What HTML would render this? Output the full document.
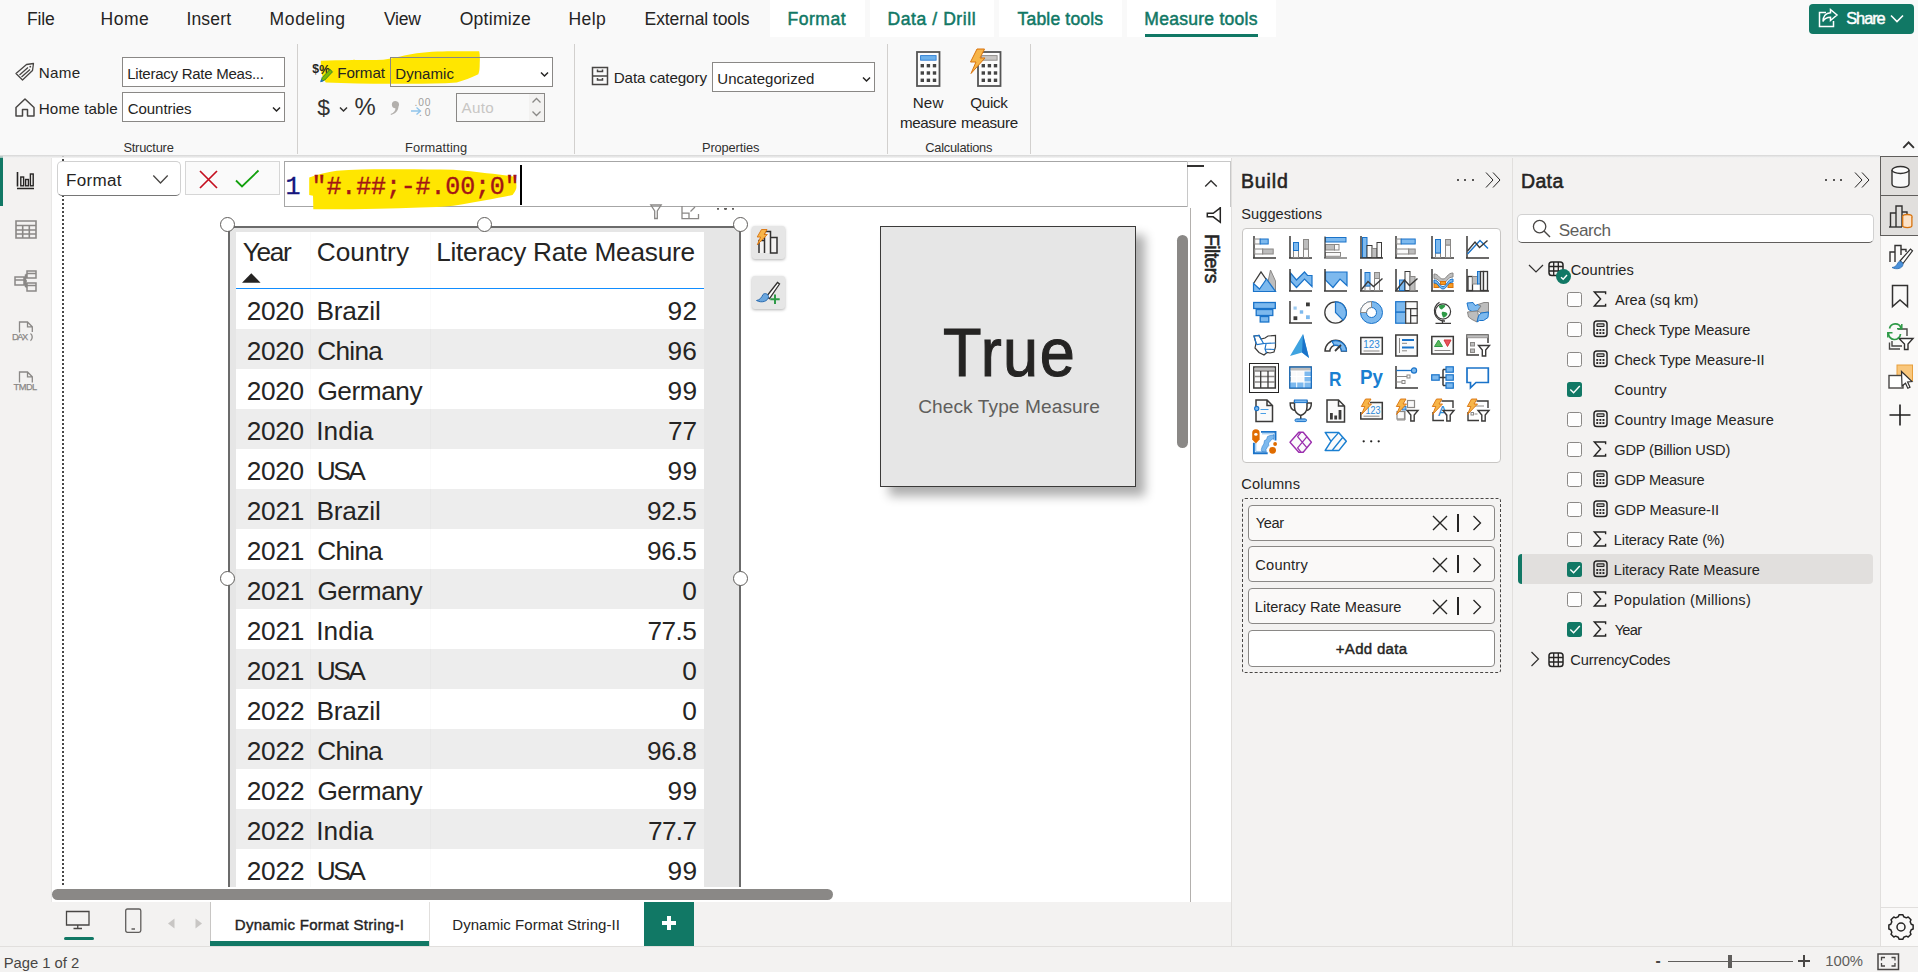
<!DOCTYPE html>
<html lang="en"><head><meta charset="utf-8"><title>Power BI Desktop - Dynamic Format String</title>
<style>
html,body{margin:0;padding:0;}
body{width:1918px;height:972px;overflow:hidden;position:relative;background:#fff;font-family:"Liberation Sans",sans-serif;color:#252423;}
.a{position:absolute;display:block;}
.t{position:absolute;white-space:nowrap;line-height:1;}
svg{overflow:visible;}
</style></head><body>
<div class="a" style="left:51.00px;top:158.00px;width:1180.00px;height:744.00px;background:#ffffff;"></div>
<div class="a" style="left:0.00px;top:158.00px;width:50.50px;height:788.00px;background:#f3f2f1;"></div>
<div class="a" style="left:50.50px;top:158.00px;width:1.00px;height:744.00px;background:#e8e7e6;"></div>
<div class="a" style="left:0.00px;top:156.00px;width:3.00px;height:49.50px;background:#117865;"></div>
<svg class="a" style="left:16.00px;top:171.00px;" width="19" height="19" viewBox="0 0 19 19"><path d="M1.5 1 V15.5 M1 17.5 H18" stroke="#252423" stroke-width="1.6" fill="none"/><rect x="4.8" y="6" width="2.8" height="8.8" fill="none" stroke="#252423" stroke-width="1.4"/><rect x="9.6" y="8.5" width="2.8" height="6.3" fill="none" stroke="#252423" stroke-width="1.4"/><rect x="14.4" y="3" width="2.8" height="11.8" fill="none" stroke="#252423" stroke-width="1.4"/></svg>
<svg class="a" style="left:14.50px;top:220.00px;" width="22" height="19" viewBox="0 0 22 19"><path d="M1 1 H21 V18 H1 Z M1 5.5 H21 M1 10 H21 M1 14 H21 M7.7 5.5 V18 M14.3 5.5 V18" stroke="#8a8886" stroke-width="1.6" fill="none"/></svg>
<svg class="a" style="left:13.50px;top:269.50px;" width="24" height="22" viewBox="0 0 24 22"><path d="M1 7 H10 V15 H1 Z M1 10 H10 M13 1 H22 V8 H13 Z M13 3.6 H22 M13 13 H22 V21 H13 Z M13 15.6 H22 M10 11 H13 M11.5 4.5 V17 M11.5 4.5 H13 M11.5 17 H13" stroke="#8a8886" stroke-width="1.5" fill="none"/></svg>
<svg class="a" style="left:0.00px;top:0.00px;" width="50" height="400" viewBox="0 0 50 400"><path d="M19.5 332.5 V322 H27.5 L32.3 326.800000 V332 M27.5 322 V326.8 H32.3 M30.5 333.5 C32.8 335 32.8 339 30.5 340.8" stroke="#8a8886" stroke-width="1.3" fill="none"/></svg>
<div class="t" style="left:12.04px;top:333.00px;font-size:9.30px;letter-spacing:-1.482px;color:#8a8886;-webkit-text-stroke:0.25px #8a8886;">DAX</div>
<svg class="a" style="left:0.00px;top:0.00px;" width="50" height="400" viewBox="0 0 50 400"><path d="M19.5 382.5 V372 H27.5 L32.3 376.800000 V382.5 M27.5 372 V376.8 H32.3" stroke="#8a8886" stroke-width="1.3" fill="none"/></svg>
<div class="t" style="left:13.59px;top:383.00px;font-size:9.30px;letter-spacing:-0.533px;color:#8a8886;-webkit-text-stroke:0.25px #8a8886;">TMDL</div>
<div class="a" style="left:62.00px;top:155.00px;width:2.00px;height:731.00px;background:repeating-linear-gradient(#484848 0,#484848 2px,transparent 2px,transparent 4px);"></div>
<div class="a" style="left:56.50px;top:161.20px;width:124.00px;height:34.50px;background:#fff;border:1px solid #d1d1d1;border-bottom:1.5px solid #767676;border-radius:5px;box-sizing:border-box;"></div>
<div class="t" style="left:66.10px;top:172.00px;font-size:17.06px;letter-spacing:0.297px;color:#252423;">Format</div>
<svg class="a" style="left:152.00px;top:174.00px;" width="17" height="11" viewBox="0 0 17 11"><path d="M1.3 1.5 L8.5 9 L15.7 1.5" fill="none" stroke="#484644" stroke-width="1.3"/></svg>
<div class="a" style="left:185.00px;top:161.20px;width:94.50px;height:34.30px;background:#fafafa;border:1px solid #d6d6d6;box-sizing:border-box;"></div>
<svg class="a" style="left:199.00px;top:169.50px;" width="19" height="19" viewBox="0 0 19 19"><path d="M1 1 L18 18 M18 1 L1 18" stroke="#c50f1f" stroke-width="1.7" fill="none"/></svg>
<svg class="a" style="left:235.00px;top:169.00px;" width="25" height="19" viewBox="0 0 25 19"><path d="M1 11.5 L7 17.5 L23.5 1.5" stroke="#13a10e" stroke-width="1.8" fill="none"/></svg>
<div class="a" style="left:283.50px;top:161.20px;width:947.00px;height:46.30px;background:#fff;border:1px solid #a6a6a6;box-sizing:border-box;"></div>
<div class="a" style="left:1186.50px;top:161.20px;width:44.00px;height:46.30px;background:#fff;border:1px solid #c8c8c8;box-sizing:border-box;"></div>
<div class="a" style="left:1186.50px;top:165.00px;width:17.00px;height:1.80px;background:#323130;"></div>
<svg class="a" style="left:1204.00px;top:178.50px;" width="14" height="9" viewBox="0 0 14 9"><path d="M1.2 7.5 L7 1.7 L12.8 7.5" fill="none" stroke="#323130" stroke-width="1.4"/></svg>
<svg class="a" style="left:0.00px;top:0.00px;" width="600" height="220" viewBox="0 0 600 220"><path d="M309.2 177.5 C318 174.5 327 172 336.7 170.8 C352 169.5 370 169.200000 386.7 169.2 C408 169 432 169.3 453.3 169.7 C465 170.5 476 171.8 486.7 173.3 C497 174.3 506 175.300000 515 176.7 C516.300000 180.5 516.6 184.5 516.3 188.3 C515.5 191 514 193.300000 512.5 195 C504 197 495 198.500000 486.700000 200 C475 202 464 204.2 453.300000 205.8 C442 207 431 207.3 420 207.5 C406 208.2 392 208.600000 378.3 208.7 C356 209.2 334 209.300000 313.3 209.2 C313.200000 204.5 313.2 200 313 195.8 L309.2 195 Z" fill="#ffe600"/></svg>
<div class="t" style="left:285.49px;top:175.00px;font-size:25.00px;color:#15157d;font-family:'Liberation Mono',monospace;-webkit-text-stroke:0.35px #15157d;">1</div>
<div class="t" style="left:311.62px;top:175.00px;font-size:25.00px;letter-spacing:-0.149px;color:#a31515;font-family:'Liberation Mono',monospace;-webkit-text-stroke:0.35px #a31515;">&quot;#.##;-#.00;0&quot;</div>
<div class="a" style="left:520.00px;top:165.00px;width:2.00px;height:40.00px;background:#000;"></div>
<svg class="a" style="left:650.00px;top:207.50px;" width="12" height="12" viewBox="0 0 12 12"><path d="M0.8 -3 H11.2 L7.3 3 V10.5 H4.7 V3 Z" fill="none" stroke="#8a8886" stroke-width="1.3"/></svg>
<svg class="a" style="left:681.00px;top:207.50px;" width="19" height="12" viewBox="0 0 19 12"><path d="M1 -2 V10.7 H17.5 V6 M1 5.2 H8 V10.7 M9.5 3.5 L14 -1" fill="none" stroke="#8a8886" stroke-width="1.3"/></svg>
<div class="a" style="left:716.50px;top:207.50px;width:2.60px;height:2.30px;background:#605e5c;border-radius:0 0 1.3px 1.3px;"></div>
<div class="a" style="left:724.20px;top:207.50px;width:2.60px;height:2.30px;background:#605e5c;border-radius:0 0 1.3px 1.3px;"></div>
<div class="a" style="left:731.90px;top:207.50px;width:2.60px;height:2.30px;background:#605e5c;border-radius:0 0 1.3px 1.3px;"></div>
<div class="a" style="left:227.50px;top:225.50px;width:513.50px;height:661.20px;background:#e6e6e6;border:2px solid #6b6b6b;border-bottom:none;box-sizing:border-box;"></div>
<div class="a" style="left:235.50px;top:232.00px;width:468.00px;height:654.70px;background:#fff;"></div>
<div class="t" style="left:246.68px;top:298.00px;font-size:26.23px;letter-spacing:-0.268px;color:#252423;">2020</div>
<div class="t" style="left:316.55px;top:298.00px;font-size:26.23px;letter-spacing:-0.276px;color:#252423;">Brazil</div>
<div class="t" style="left:667.57px;top:298.00px;font-size:26.23px;letter-spacing:0.374px;color:#252423;">92</div>
<div class="a" style="left:235.50px;top:328.50px;width:468.00px;height:40.00px;background:#ededed;"></div>
<div class="t" style="left:246.68px;top:338.00px;font-size:26.23px;letter-spacing:-0.268px;color:#252423;">2020</div>
<div class="t" style="left:317.37px;top:338.00px;font-size:26.23px;letter-spacing:-0.774px;color:#252423;">China</div>
<div class="t" style="left:667.57px;top:338.00px;font-size:26.23px;letter-spacing:0.208px;color:#252423;">96</div>
<div class="t" style="left:246.68px;top:378.00px;font-size:26.23px;letter-spacing:-0.268px;color:#252423;">2020</div>
<div class="t" style="left:317.38px;top:378.00px;font-size:26.23px;letter-spacing:-0.448px;color:#252423;">Germany</div>
<div class="t" style="left:667.57px;top:378.00px;font-size:26.23px;letter-spacing:0.298px;color:#252423;">99</div>
<div class="a" style="left:235.50px;top:408.50px;width:468.00px;height:40.00px;background:#ededed;"></div>
<div class="t" style="left:246.68px;top:418.00px;font-size:26.23px;letter-spacing:-0.268px;color:#252423;">2020</div>
<div class="t" style="left:316.28px;top:418.00px;font-size:26.23px;letter-spacing:0.061px;color:#252423;">India</div>
<div class="t" style="left:667.96px;top:418.00px;font-size:26.23px;letter-spacing:-0.010px;color:#252423;">77</div>
<div class="t" style="left:246.68px;top:458.00px;font-size:26.23px;letter-spacing:-0.268px;color:#252423;">2020</div>
<div class="t" style="left:316.68px;top:458.00px;font-size:26.23px;letter-spacing:-2.478px;color:#252423;">USA</div>
<div class="t" style="left:667.57px;top:458.00px;font-size:26.23px;letter-spacing:0.298px;color:#252423;">99</div>
<div class="a" style="left:235.50px;top:488.50px;width:468.00px;height:40.00px;background:#ededed;"></div>
<div class="t" style="left:246.68px;top:498.00px;font-size:26.23px;letter-spacing:-0.183px;color:#252423;">2021</div>
<div class="t" style="left:316.55px;top:498.00px;font-size:26.23px;letter-spacing:-0.276px;color:#252423;">Brazil</div>
<div class="t" style="left:647.07px;top:498.00px;font-size:26.23px;letter-spacing:-0.406px;color:#252423;">92.5</div>
<div class="t" style="left:246.68px;top:538.00px;font-size:26.23px;letter-spacing:-0.183px;color:#252423;">2021</div>
<div class="t" style="left:317.37px;top:538.00px;font-size:26.23px;letter-spacing:-0.774px;color:#252423;">China</div>
<div class="t" style="left:647.07px;top:538.00px;font-size:26.23px;letter-spacing:-0.406px;color:#252423;">96.5</div>
<div class="a" style="left:235.50px;top:568.50px;width:468.00px;height:40.00px;background:#ededed;"></div>
<div class="t" style="left:246.68px;top:578.00px;font-size:26.23px;letter-spacing:-0.183px;color:#252423;">2021</div>
<div class="t" style="left:317.38px;top:578.00px;font-size:26.23px;letter-spacing:-0.448px;color:#252423;">Germany</div>
<div class="t" style="left:682.24px;top:578.00px;font-size:26.23px;color:#252423;">0</div>
<div class="t" style="left:246.68px;top:618.00px;font-size:26.23px;letter-spacing:-0.183px;color:#252423;">2021</div>
<div class="t" style="left:316.28px;top:618.00px;font-size:26.23px;letter-spacing:0.061px;color:#252423;">India</div>
<div class="t" style="left:647.46px;top:618.00px;font-size:26.23px;letter-spacing:-0.534px;color:#252423;">77.5</div>
<div class="a" style="left:235.50px;top:648.50px;width:468.00px;height:40.00px;background:#ededed;"></div>
<div class="t" style="left:246.68px;top:658.00px;font-size:26.23px;letter-spacing:-0.183px;color:#252423;">2021</div>
<div class="t" style="left:316.68px;top:658.00px;font-size:26.23px;letter-spacing:-2.478px;color:#252423;">USA</div>
<div class="t" style="left:682.24px;top:658.00px;font-size:26.23px;color:#252423;">0</div>
<div class="t" style="left:246.68px;top:698.00px;font-size:26.23px;letter-spacing:-0.170px;color:#252423;">2022</div>
<div class="t" style="left:316.55px;top:698.00px;font-size:26.23px;letter-spacing:-0.276px;color:#252423;">Brazil</div>
<div class="t" style="left:682.24px;top:698.00px;font-size:26.23px;color:#252423;">0</div>
<div class="a" style="left:235.50px;top:728.50px;width:468.00px;height:40.00px;background:#ededed;"></div>
<div class="t" style="left:246.68px;top:738.00px;font-size:26.23px;letter-spacing:-0.170px;color:#252423;">2022</div>
<div class="t" style="left:317.37px;top:738.00px;font-size:26.23px;letter-spacing:-0.774px;color:#252423;">China</div>
<div class="t" style="left:647.07px;top:738.00px;font-size:26.23px;letter-spacing:-0.393px;color:#252423;">96.8</div>
<div class="t" style="left:246.68px;top:778.00px;font-size:26.23px;letter-spacing:-0.170px;color:#252423;">2022</div>
<div class="t" style="left:317.38px;top:778.00px;font-size:26.23px;letter-spacing:-0.448px;color:#252423;">Germany</div>
<div class="t" style="left:667.57px;top:778.00px;font-size:26.23px;letter-spacing:0.298px;color:#252423;">99</div>
<div class="a" style="left:235.50px;top:808.50px;width:468.00px;height:40.00px;background:#ededed;"></div>
<div class="t" style="left:246.68px;top:818.00px;font-size:26.23px;letter-spacing:-0.170px;color:#252423;">2022</div>
<div class="t" style="left:316.28px;top:818.00px;font-size:26.23px;letter-spacing:0.061px;color:#252423;">India</div>
<div class="t" style="left:647.96px;top:818.00px;font-size:26.23px;letter-spacing:-0.628px;color:#252423;">77.7</div>
<div class="t" style="left:246.68px;top:858.00px;font-size:26.23px;letter-spacing:-0.170px;color:#252423;">2022</div>
<div class="t" style="left:316.68px;top:858.00px;font-size:26.23px;letter-spacing:-2.478px;color:#252423;">USA</div>
<div class="t" style="left:667.57px;top:858.00px;font-size:26.23px;letter-spacing:0.298px;color:#252423;">99</div>
<div class="a" style="left:310.00px;top:232.00px;width:1.00px;height:654.70px;background:rgba(0,0,0,0.02);"></div>
<div class="a" style="left:430.00px;top:232.00px;width:1.00px;height:654.70px;background:rgba(0,0,0,0.02);"></div>
<div class="t" style="left:242.72px;top:239.00px;font-size:26.23px;letter-spacing:-1.328px;color:#252423;">Year</div>
<div class="t" style="left:316.67px;top:239.00px;font-size:26.23px;letter-spacing:0.091px;color:#252423;">Country</div>
<div class="t" style="left:436.15px;top:239.00px;font-size:26.23px;letter-spacing:-0.242px;color:#252423;">Literacy Rate Measure</div>
<svg class="a" style="left:242.00px;top:273.00px;" width="19" height="10" viewBox="0 0 19 10"><path d="M0 9.7 L9.3 0.3 L18.6 9.7 Z" fill="#252423"/></svg>
<div class="a" style="left:235.50px;top:287.70px;width:468.00px;height:1.40px;background:#118dff;"></div>
<div class="a" style="left:219.70px;top:217.10px;width:15.00px;height:15.00px;background:#fff;border:1.3px solid #605e5c;border-radius:50%;box-sizing:border-box;"></div>
<div class="a" style="left:476.50px;top:217.10px;width:15.00px;height:15.00px;background:#fff;border:1.3px solid #605e5c;border-radius:50%;box-sizing:border-box;"></div>
<div class="a" style="left:733.30px;top:217.10px;width:15.00px;height:15.00px;background:#fff;border:1.3px solid #605e5c;border-radius:50%;box-sizing:border-box;"></div>
<div class="a" style="left:219.70px;top:570.80px;width:15.00px;height:15.00px;background:#fff;border:1.3px solid #605e5c;border-radius:50%;box-sizing:border-box;"></div>
<div class="a" style="left:733.30px;top:570.80px;width:15.00px;height:15.00px;background:#fff;border:1.3px solid #605e5c;border-radius:50%;box-sizing:border-box;"></div>
<div class="a" style="left:751.50px;top:225.50px;width:33.50px;height:33.50px;background:#e6e6e6;border-radius:3px;box-shadow:0 1px 3px rgba(0,0,0,0.3);"></div>
<div class="a" style="left:751.50px;top:275.50px;width:33.50px;height:33.50px;background:#e6e6e6;border-radius:3px;box-shadow:0 1px 3px rgba(0,0,0,0.3);"></div>
<svg class="a" style="left:755.00px;top:229.00px;" width="26" height="26" viewBox="0 0 26 26"><path d="M4 24 V11.5 H9.5 V24 M9.5 24 V2.5 H15.5 V24 M15.5 24 V8.5 H22 V24 Z" fill="#f3f2f1" stroke="#323130" stroke-width="1.5"/><path d="M6.5 0.5 H12 L9.2 5.5 H12.3 L2.3 15.8 L5.6 8 H2.2 Z" fill="#f7b548" stroke="#d9730d" stroke-width="0.9"/></svg>
<svg class="a" style="left:755.00px;top:279.00px;" width="27" height="27" viewBox="0 0 27 27"><path d="M11.5 17.5 L22.5 3.5 L24.5 5 L14.5 19.5 Z" fill="#fff" stroke="#323130" stroke-width="1.3"/><path d="M1.5 21.5 C5 21 6.5 18.5 8 15.5 C10 13.5 13 15 13.5 17.5 C13.5 22 7 24.5 1.5 21.5 Z" fill="#6aa6de" stroke="#2b6cb0" stroke-width="1"/><path d="M20 15.5 V25 M15.3 20.2 H24.7" stroke="#2e9a47" stroke-width="2"/></svg>
<div class="a" style="left:880.00px;top:225.50px;width:256.00px;height:261.50px;background:#e6e6e6;border:1px solid #3b3a39;box-sizing:border-box;box-shadow:9px 9px 10px rgba(0,0,0,0.32);"></div>
<div class="t" style="left:942.85px;top:318px;font-size:68px;letter-spacing:1.60px;color:#252423;-webkit-text-stroke:1.1px #252423;transform-origin:0 0;transform:scaleX(0.9267);">True</div>
<div class="t" style="left:918.13px;top:397.00px;font-size:19.11px;letter-spacing:0.088px;color:#605e5c;">Check Type Measure</div>
<div class="a" style="left:1177.00px;top:234.50px;width:11.00px;height:213.00px;background:#8a8886;border-radius:5.5px;"></div>
<div class="a" style="left:51.50px;top:889.00px;width:781.00px;height:11.00px;background:#8a8886;border-radius:5.5px;"></div>
<div class="a" style="left:1190.00px;top:207.50px;width:1.00px;height:694.00px;background:#b3b0ad;"></div>
<svg class="a" style="left:1200.00px;top:200.00px;" width="26" height="26" viewBox="0 0 26 26"><path d="M20.3 6 V22.300000 L13.2 16.8 H7.300000 V13.300000 H13.2 L20.300000 7.8" fill="none" stroke="#252423" stroke-width="1.5"/></svg>
<div class="a" style="left:1188.00px;top:200.00px;width:42.00px;height:6.50px;background:#fff;"></div>
<div class="t" style="left:1220.6px;top:234px;font-size:19.5px;-webkit-text-stroke:0.55px #252423;color:#252423;transform-origin:0 0;transform:rotate(90deg);letter-spacing:-0.6px;">Filters</div>
<div class="a" style="left:0.00px;top:901.50px;width:1231.50px;height:45.00px;background:#f3f2f1;"></div>
<svg class="a" style="left:65.00px;top:910.00px;" width="27" height="20" viewBox="0 0 27 20"><path d="M1.5 1.5 H24 V15 H1.5 Z M12.75 15 V18.3 M8.5 18.5 H17" fill="none" stroke="#484644" stroke-width="1.3"/></svg>
<div class="a" style="left:64.00px;top:936.50px;width:29.50px;height:3.50px;background:#117865;border-radius:2px;"></div>
<svg class="a" style="left:124.00px;top:908.00px;" width="19" height="26" viewBox="0 0 19 26"><path d="M3.5 1 H15 Q16.8 1 16.8 2.8 V22.5 Q16.8 24.3 15 24.3 H3.5 Q1.7 24.3 1.7 22.5 V2.8 Q1.7 1 3.5 1 Z M7.5 21 H11" fill="none" stroke="#605e5c" stroke-width="1.3"/></svg>
<svg class="a" style="left:167.00px;top:918.00px;" width="9" height="11" viewBox="0 0 9 11"><path d="M7.5 0.5 V10.5 L1 5.5 Z" fill="#c8c6c4"/></svg>
<svg class="a" style="left:194.00px;top:918.00px;" width="9" height="11" viewBox="0 0 9 11"><path d="M1.5 0.5 V10.5 L8 5.5 Z" fill="#c8c6c4"/></svg>
<div class="a" style="left:210.00px;top:901.50px;width:218.50px;height:44.50px;background:#fff;border-left:1px solid #c8c6c4;box-sizing:border-box;"></div>
<div class="a" style="left:210.00px;top:941.00px;width:218.50px;height:5.00px;background:#117865;"></div>
<div class="t" style="left:234.77px;top:917.00px;font-size:15.02px;letter-spacing:0.292px;color:#252423;-webkit-text-stroke:0.42px #252423;">Dynamic Format String-I</div>
<div class="a" style="left:428.50px;top:901.50px;width:215.50px;height:44.50px;background:#fff;border-left:1px solid #e1dfdd;box-sizing:border-box;"></div>
<div class="t" style="left:452.27px;top:917.00px;font-size:15.02px;letter-spacing:0.032px;color:#252423;">Dynamic Format String-II</div>
<div class="a" style="left:644.00px;top:901.50px;width:49.50px;height:44.50px;background:#117865;"></div>
<div class="a" style="left:662.00px;top:921.30px;width:14.00px;height:3.40px;background:#fff;"></div>
<div class="a" style="left:667.30px;top:916.00px;width:3.40px;height:14.00px;background:#fff;"></div>
<div class="a" style="left:0.00px;top:946.00px;width:1918.00px;height:26.00px;background:#f3f2f1;border-top:1px solid #e1dfdd;box-sizing:border-box;"></div>
<div class="t" style="left:3.78px;top:956.00px;font-size:14.82px;letter-spacing:-0.035px;color:#484644;">Page 1 of 2</div>
<div class="t" style="left:1655.39px;top:953.00px;font-size:15.60px;color:#484644;font-weight:700;">-</div>
<div class="a" style="left:1667.50px;top:960.60px;width:125.00px;height:1.00px;background:#605e5c;"></div>
<div class="a" style="left:1727.80px;top:954.50px;width:4.40px;height:13.50px;background:#605e5c;"></div>
<div class="a" style="left:1798.00px;top:960.20px;width:12.00px;height:1.80px;background:#484644;"></div>
<div class="a" style="left:1803.10px;top:955.00px;width:1.80px;height:12.00px;background:#484644;"></div>
<div class="t" style="left:1825.37px;top:954.00px;font-size:14.82px;letter-spacing:-0.082px;color:#605e5c;">100%</div>
<svg class="a" style="left:1877.00px;top:953.00px;" width="23" height="18" viewBox="0 0 23 18"><path d="M1 1 H21.5 V16.5 H1 Z" fill="none" stroke="#484644" stroke-width="1.5"/><path d="M4.5 7.5 V4.5 H8 M14.5 4.5 H18 V7.5 M18 10 V13 H14.5 M8 13 H4.5 V10" fill="none" stroke="#484644" stroke-width="1.3"/></svg>
<div class="a" style="left:1231.50px;top:158.00px;width:280.00px;height:788.00px;background:#f3f2f1;"></div>
<div class="a" style="left:1231.00px;top:158.00px;width:1.00px;height:788.00px;background:#e1dfdd;"></div>
<div class="a" style="left:1511.50px;top:158.00px;width:1.00px;height:788.00px;background:#e1dfdd;"></div>
<div class="a" style="left:1512.50px;top:158.00px;width:367.50px;height:788.00px;background:#f3f2f1;"></div>
<div class="a" style="left:1880.00px;top:158.00px;width:38.00px;height:788.00px;background:#faf9f8;border-left:1px solid #e1dfdd;box-sizing:border-box;"></div>
<div class="t" style="left:1240.90px;top:172.00px;font-size:19.50px;letter-spacing:0.873px;color:#252423;-webkit-text-stroke:0.55px #252423;">Build</div>
<div class="a" style="left:1456.50px;top:179.00px;width:2.20px;height:2.20px;background:#252423;border-radius:50%;"></div>
<div class="a" style="left:1464.10px;top:179.00px;width:2.20px;height:2.20px;background:#252423;border-radius:50%;"></div>
<div class="a" style="left:1471.70px;top:179.00px;width:2.20px;height:2.20px;background:#252423;border-radius:50%;"></div>
<svg class="a" style="left:1484.50px;top:172.00px;" width="16" height="16" viewBox="0 0 16 16"><path d="M1 0.5 L8 8 L1 15.5 M8 0.5 L15 8 L8 15.5" fill="none" stroke="#252423" stroke-width="1"/></svg>
<div class="t" style="left:1241.34px;top:207.00px;font-size:14.62px;letter-spacing:0.020px;color:#252423;">Suggestions</div>
<div class="a" style="left:1242.00px;top:228.00px;width:258.50px;height:234.50px;background:#fff;border:1px solid #c8c6c4;border-radius:4px;box-sizing:border-box;"></div>
<svg class="a" style="left:1253.00px;top:236.00px;" width="23" height="23" viewBox="0 0 23 23"><path d="M1 0 V22 M0 22 H23" stroke="#3b3a39" stroke-width="1.5" fill="none"/><rect x="1.7" y="3" width="5.5" height="5" fill="#fafafa" stroke="#8a8886" stroke-width="1"/><rect x="7.2" y="3" width="8" height="5" fill="#7db9ee" stroke="#1a73c9" stroke-width="1"/><rect x="1.7" y="13" width="8" height="5" fill="#fafafa" stroke="#8a8886" stroke-width="1"/><rect x="9.7" y="13" width="10.5" height="5" fill="#bdbdbd" stroke="#8a8886" stroke-width="1"/></svg>
<svg class="a" style="left:1288.50px;top:236.00px;" width="23" height="23" viewBox="0 0 23 23"><path d="M1 0 V22 M0 22 H23" stroke="#3b3a39" stroke-width="1.5" fill="none"/><rect x="4.5" y="14.5" width="5" height="7" fill="#fafafa" stroke="#8a8886" stroke-width="1"/><rect x="4.5" y="6.5" width="5" height="8" fill="#7db9ee" stroke="#1a73c9" stroke-width="1"/><rect x="14.5" y="13" width="5" height="8.5" fill="#fafafa" stroke="#8a8886" stroke-width="1"/><rect x="14.5" y="3.5" width="5" height="9.5" fill="#bdbdbd" stroke="#8a8886" stroke-width="1"/></svg>
<svg class="a" style="left:1324.00px;top:236.00px;" width="23" height="23" viewBox="0 0 23 23"><rect x="1.5" y="1.5" width="20.5" height="4.5" fill="#7db9ee" stroke="#1a73c9" stroke-width="1"/><rect x="1.5" y="8.5" width="9" height="5.5" fill="#bdbdbd" stroke="#8a8886" stroke-width="1"/><rect x="10.5" y="8.5" width="4.5" height="5.5" fill="#fafafa" stroke="#8a8886" stroke-width="1"/><rect x="1.5" y="16.5" width="15" height="3.8" fill="#fafafa" stroke="#8a8886" stroke-width="1"/><path d="M1 0.5 V22 M0 22 H23" stroke="#3b3a39" stroke-width="1.2" fill="none"/></svg>
<svg class="a" style="left:1359.50px;top:236.00px;" width="23" height="23" viewBox="0 0 23 23"><rect x="2.5" y="1.5" width="4.5" height="20" fill="#7db9ee" stroke="#1a73c9" stroke-width="1"/><rect x="7" y="9.5" width="5" height="12" fill="#fafafa" stroke="#3b3a39" stroke-width="1"/><rect x="12" y="12.5" width="5" height="9" fill="#bdbdbd" stroke="#8a8886" stroke-width="1"/><rect x="17" y="6.5" width="4.5" height="15" fill="#fafafa" stroke="#3b3a39" stroke-width="1"/><path d="M1 0 V22 M0 22 H23" stroke="#3b3a39" stroke-width="1.5" fill="none"/></svg>
<svg class="a" style="left:1395.00px;top:236.00px;" width="23" height="23" viewBox="0 0 23 23"><path d="M1 0 V22 M0 22 H23" stroke="#3b3a39" stroke-width="1.5" fill="none"/><rect x="1.7" y="3" width="4.5" height="5" fill="#fafafa" stroke="#8a8886" stroke-width="1"/><rect x="6.2" y="3" width="14" height="5" fill="#7db9ee" stroke="#1a73c9" stroke-width="1"/><rect x="1.7" y="13" width="12" height="5" fill="#fafafa" stroke="#8a8886" stroke-width="1"/><rect x="13.7" y="13" width="6.5" height="5" fill="#bdbdbd" stroke="#8a8886" stroke-width="1"/></svg>
<svg class="a" style="left:1430.50px;top:236.00px;" width="23" height="23" viewBox="0 0 23 23"><path d="M1 0 V22 M0 22 H23" stroke="#3b3a39" stroke-width="1.5" fill="none"/><rect x="4.5" y="17" width="5" height="4.5" fill="#fafafa" stroke="#8a8886" stroke-width="1"/><rect x="4.5" y="3.5" width="5" height="13.5" fill="#7db9ee" stroke="#1a73c9" stroke-width="1"/><rect x="14.5" y="9" width="5" height="12.5" fill="#fafafa" stroke="#8a8886" stroke-width="1"/><rect x="14.5" y="3.5" width="5" height="5.5" fill="#bdbdbd" stroke="#8a8886" stroke-width="1"/></svg>
<svg class="a" style="left:1466.00px;top:236.00px;" width="23" height="23" viewBox="0 0 23 23"><path d="M1 0 V22 M0 22 H23" stroke="#3b3a39" stroke-width="1.5" fill="none"/><path d="M1.5 18 L14 4.5 L22 12.5" fill="none" stroke="#1a73c9" stroke-width="1.4"/><path d="M1.5 15 L9 6 L13.5 11.5 L21.5 4.5" fill="none" stroke="#3b3a39" stroke-width="1.4"/></svg>
<svg class="a" style="left:1253.00px;top:268.55px;" width="23" height="23" viewBox="0 0 23 23"><path d="M13 22 L17.5 1 L22.5 12 V22 Z" fill="#bdbdbd" stroke="#8a8886" stroke-width="1"/><path d="M0.5 14.5 L8 3 L15 13" fill="#fafafa" stroke="#3b3a39" stroke-width="1.3"/><path d="M0.5 14.5 L6.5 20 L13.5 10 L22.5 22.5 H0.5 Z" fill="#7db9ee" stroke="#1a73c9" stroke-width="1.2"/></svg>
<svg class="a" style="left:1288.50px;top:268.55px;" width="23" height="23" viewBox="0 0 23 23"><path d="M1.5 4 L7.5 11 L15.5 3 L18.5 6.5 H23 V17.5 L15.5 10 L7.5 18.5 L1.5 12 Z" fill="#7db9ee" stroke="#1a73c9" stroke-width="1.2"/><path d="M1 0 V22 M0 22 H23" stroke="#3b3a39" stroke-width="1.5" fill="none"/></svg>
<svg class="a" style="left:1324.00px;top:268.55px;" width="23" height="23" viewBox="0 0 23 23"><path d="M1.5 3 H23 V16.5 L16 10 L9 18.5 L1.5 11 Z" fill="#7db9ee" stroke="#1a73c9" stroke-width="1.2"/><path d="M1 0 V22 M0 22 H23" stroke="#3b3a39" stroke-width="1.5" fill="none"/></svg>
<svg class="a" style="left:1359.50px;top:268.55px;" width="23" height="23" viewBox="0 0 23 23"><path d="M1 0 V22 M0 22 H23" stroke="#3b3a39" stroke-width="1.5" fill="none"/><rect x="5" y="17" width="5" height="4.5" fill="#fafafa" stroke="#8a8886" stroke-width="1"/><rect x="5" y="3.5" width="5" height="13.5" fill="#7db9ee" stroke="#1a73c9" stroke-width="1"/><rect x="14.5" y="9.5" width="5" height="12" fill="#fafafa" stroke="#8a8886" stroke-width="1"/><rect x="14.5" y="3.5" width="5" height="6" fill="#bdbdbd" stroke="#8a8886" stroke-width="1"/><path d="M1.5 20.5 L8 12.5 L13.5 17.5 L22.5 9.5" fill="none" stroke="#3b3a39" stroke-width="1.4"/></svg>
<svg class="a" style="left:1395.00px;top:268.55px;" width="23" height="23" viewBox="0 0 23 23"><path d="M1 0 V22 M0 22 H23" stroke="#3b3a39" stroke-width="1.5" fill="none"/><rect x="4.5" y="11" width="5" height="10.5" fill="#7db9ee" stroke="#1a73c9" stroke-width="1"/><rect x="10" y="2.5" width="5" height="19" fill="#fafafa" stroke="#3b3a39" stroke-width="1"/><rect x="15" y="7.5" width="5" height="14" fill="#bdbdbd" stroke="#8a8886" stroke-width="1"/><path d="M1.5 21 L9.5 11 L14.5 16.5 L22.5 9.5" fill="none" stroke="#3b3a39" stroke-width="1.4"/></svg>
<svg class="a" style="left:1430.50px;top:268.55px;" width="23" height="23" viewBox="0 0 23 23"><path d="M3 5 C8 5 8 10 12 10 C16 10 16 4 22 4 V8 C16 8 16 14 12 14 C8 14 8 9.5 3 9.5 Z" fill="#bdbdbd" stroke="#8a8886" stroke-width="1"/><rect x="3" y="14.5" width="5" height="4" fill="#f59b23" stroke="#d9730d" stroke-width="1"/><rect x="17" y="14.5" width="5" height="4" fill="#f59b23" stroke="#d9730d" stroke-width="1"/><rect x="9.5" y="12.5" width="5" height="3" fill="#f59b23" stroke="#d9730d" stroke-width="1"/><path d="M3 11 C8 11 8 17.5 12 17.5 C16 17.5 16 10 22 10 V13 C16 13 16 20 12 20 C8 20 8 14 3 14 Z" fill="#7db9ee" stroke="#1a73c9" stroke-width="1"/><path d="M1 0 V22 M0 22 H23" stroke="#3b3a39" stroke-width="1.5" fill="none"/></svg>
<svg class="a" style="left:1466.00px;top:268.55px;" width="23" height="23" viewBox="0 0 23 23"><rect x="2" y="7.5" width="4.5" height="14" fill="#fafafa" stroke="#3b3a39" stroke-width="1.3"/><rect x="6.5" y="7.5" width="5" height="7.5" fill="#bdbdbd" stroke="#8a8886" stroke-width="1"/><rect x="11.5" y="2.5" width="3" height="12.5" fill="#7db9ee" stroke="#1a73c9" stroke-width="1"/><rect x="14.5" y="2.5" width="3" height="19" fill="#fafafa" stroke="#3b3a39" stroke-width="1.3"/><rect x="17.5" y="2.5" width="4" height="19" fill="#fafafa" stroke="#3b3a39" stroke-width="1.3"/><path d="M1 0 V22 M0 22 H23" stroke="#3b3a39" stroke-width="1.5" fill="none"/></svg>
<svg class="a" style="left:1253.00px;top:301.10px;" width="23" height="23" viewBox="0 0 23 23"><rect x="0.7" y="1.5" width="21.6" height="6" fill="#7db9ee" stroke="#1a73c9" stroke-width="1.3"/><rect x="3.2" y="8.5" width="16.6" height="6" fill="#7db9ee" stroke="#1a73c9" stroke-width="1.3"/><rect x="7.2" y="15.5" width="8.6" height="5.5" fill="#7db9ee" stroke="#1a73c9" stroke-width="1.3"/></svg>
<svg class="a" style="left:1288.50px;top:301.10px;" width="23" height="23" viewBox="0 0 23 23"><path d="M1 0 V22 M0 22 H23" stroke="#3b3a39" stroke-width="1.5" fill="none"/><rect x="17" y="1.5" width="3.8" height="3.8" fill="#3b3a39" stroke="#3b3a39" stroke-width="0"/><rect x="4.5" y="5.5" width="3.2" height="3.2" fill="#9cc9f0" stroke="#9cc9f0" stroke-width="0"/><rect x="10.8" y="9.3" width="3.4" height="3.4" fill="#7db9ee" stroke="#7db9ee" stroke-width="0"/><rect x="4.5" y="15.3" width="3.8" height="3.8" fill="#3b3a39" stroke="#3b3a39" stroke-width="0"/><rect x="17" y="14.3" width="3.8" height="3.8" fill="#7db9ee" stroke="#7db9ee" stroke-width="0"/></svg>
<svg class="a" style="left:1324.00px;top:301.10px;" width="23" height="23" viewBox="0 0 23 23"><circle cx="11.5" cy="11.5" r="10.7" fill="#fafafa" stroke="#3b3a39" stroke-width="1.3"/><path d="M11.5 0.8 A10.7 10.7 0 0 1 19.1 19.1 L11.5 11.5 Z" fill="#7db9ee" stroke="#1a73c9" stroke-width="1.2"/></svg>
<svg class="a" style="left:1359.50px;top:301.10px;" width="23" height="23" viewBox="0 0 23 23"><circle cx="11.5" cy="11.5" r="8" fill="none" stroke="#7db9ee" stroke-width="6"/><circle cx="11.5" cy="11.5" r="11" fill="none" stroke="#1a73c9" stroke-width="1"/><circle cx="11.5" cy="11.5" r="5" fill="none" stroke="#1a73c9" stroke-width="1"/><path d="M0.5 11.5 A11 11 0 0 1 11.5 0.5 V6.5 A5 5 0 0 0 6.5 11.5 Z" fill="#fafafa" stroke="#8a8886" stroke-width="1"/></svg>
<svg class="a" style="left:1395.00px;top:301.10px;" width="23" height="23" viewBox="0 0 23 23"><rect x="0.7" y="0.7" width="10" height="10.5" fill="#7db9ee" stroke="#1a73c9" stroke-width="1.2"/><rect x="0.7" y="11.2" width="10" height="11" fill="#7db9ee" stroke="#1a73c9" stroke-width="1.2"/><rect x="10.7" y="0.7" width="11.5" height="7" fill="#fafafa" stroke="#3b3a39" stroke-width="1.2"/><rect x="10.7" y="7.7" width="5" height="14.5" fill="#fafafa" stroke="#3b3a39" stroke-width="1.2"/><rect x="15.7" y="7.7" width="6.5" height="7" fill="#fafafa" stroke="#3b3a39" stroke-width="1.2"/><rect x="15.7" y="14.7" width="6.5" height="7.5" fill="#fafafa" stroke="#3b3a39" stroke-width="1.2"/></svg>
<svg class="a" style="left:1430.50px;top:301.10px;" width="23" height="23" viewBox="0 0 23 23"><circle cx="12" cy="10.5" r="7.6" fill="#fff" stroke="#3b3a39" stroke-width="1.2"/><path d="M8 5 C10 3.5 13 3.5 14.5 4.5 C14 6.5 12 7 11 8.5 C9.5 8.5 8 7 8 5 Z M11 11 C13 10.5 16 11.5 16.5 13 C15.5 15.5 13.5 17 12 16.5 C11.5 14.5 10 13 11 11 Z" fill="#2e9a47"/><path d="M8.5 1.3 A10 10 0 0 0 14 20" fill="none" stroke="#3b3a39" stroke-width="1.3"/><path d="M11.5 20 V22 M4.5 22.3 H20" stroke="#3b3a39" stroke-width="1.3"/></svg>
<svg class="a" style="left:1466.00px;top:301.10px;" width="23" height="23" viewBox="0 0 23 23"><path d="M1 2 L7 1.5 L9 4.5 L12 3.5 L15 5 L11.5 10 L6 10.5 L2.5 8.5 Z" fill="#7db9ee" stroke="#1a73c9" stroke-width="1"/><path d="M12 3.5 L18 1.5 L22.5 1.5 V11 L15 12 L11.5 10 L15 5 Z" fill="#bdbdbd" stroke="#8a8886" stroke-width="1"/><path d="M1.5 11 L6 10.5 L11.5 10 L12.5 15 L11 21 L6 18.5 L2.5 16 Z" fill="#bdbdbd" stroke="#8a8886" stroke-width="1"/><path d="M12.5 15 L15 12 L22.5 11 L22 16.5 L17.5 19.5 L13.5 19.5 L11 21 Z" fill="#7db9ee" stroke="#1a73c9" stroke-width="1"/></svg>
<svg class="a" style="left:1253.00px;top:333.65px;" width="23" height="23" viewBox="0 0 23 23"><path d="M1 2 L6 1.5 L8 5 L12 4 L15 2 L22.5 1.5 V13 L21 18 L17 19 L14 18.5 L11 21 L6 18.5 L2 14 L3 9 Z" fill="#fff" stroke="#3b3a39" stroke-width="1.2"/><path d="M1 2 L6 1.5 L8 5 L10.5 9.5 L4 10.5 L3 9 Z M10.5 9.5 L22.5 9 M13 10 L12 15 L13.5 19 M12 15 L21.5 15.5" fill="none" stroke="#1a73c9" stroke-width="1.2"/></svg>
<svg class="a" style="left:1288.50px;top:333.65px;" width="23" height="23" viewBox="0 0 23 23"><path d="M14 0 L20 24 L13 18.5 L1 22 Z" fill="#3fa3e0"/><path d="M14 0 L20 24 L13 18.5 Z" fill="#1a73c9"/></svg>
<svg class="a" style="left:1324.00px;top:333.65px;" width="23" height="23" viewBox="0 0 23 23"><path d="M1 17 A10.7 10.7 0 0 1 22.4 17 H17.5 A5.8 5.8 0 0 0 5.9 17 Z" fill="#fff" stroke="#3b3a39" stroke-width="1.4"/><path d="M8 7.3 A10.7 10.7 0 0 1 22.4 17 H17.5 A5.8 5.8 0 0 0 10.2 11.4 Z" fill="#7db9ee" stroke="#1a73c9" stroke-width="1.2"/><path d="M11 17 L17 11" stroke="#3b3a39" stroke-width="1.8"/></svg>
<svg class="a" style="left:1359.50px;top:333.65px;" width="23" height="23" viewBox="0 0 23 23"><rect x="0.8" y="3.5" width="21.5" height="16.5" fill="#fafafa" stroke="#3b3a39" stroke-width="1.5"/><text x="3.2" y="14.3" font-size="10.5" font-family="'Liberation Sans',sans-serif" fill="#2b88d8" textLength="16.5" lengthAdjust="spacingAndGlyphs">123</text><path d="M3.5 17 H19.5" stroke="#8a8886" stroke-width="1"/></svg>
<svg class="a" style="left:1395.00px;top:333.65px;" width="23" height="23" viewBox="0 0 23 23"><rect x="0.8" y="1" width="21.5" height="21" fill="#fafafa" stroke="#3b3a39" stroke-width="1.5"/><path d="M4.5 4 V19" stroke="#8a8886" stroke-width="1"/><path d="M7 6 H19 M7 13.5 H19" stroke="#1a73c9" stroke-width="1.8"/><path d="M7 9.3 H12 M7 16.8 H12" stroke="#8a8886" stroke-width="1"/></svg>
<svg class="a" style="left:1430.50px;top:333.65px;" width="23" height="23" viewBox="0 0 23 23"><rect x="0.8" y="2.5" width="21.5" height="17.5" fill="#fafafa" stroke="#3b3a39" stroke-width="1.5"/><path d="M3.5 12.5 L7.5 6 L11.5 12.5 Z" fill="#5bb75b" stroke="#2e9a47" stroke-width="1"/><path d="M13 6 H20 L16.5 12.5 Z" fill="#e8515b" stroke="#d13438" stroke-width="1"/><path d="M3.5 16.5 H19.5" stroke="#8a8886" stroke-width="1"/></svg>
<svg class="a" style="left:1466.00px;top:333.65px;" width="23" height="23" viewBox="0 0 23 23"><path d="M22 9 V1 H1 V21 H13" fill="none" stroke="#3b3a39" stroke-width="1.5"/><rect x="1" y="1" width="21" height="2.8" fill="#bdbdbd" stroke="#8a8886" stroke-width="0.8"/><rect x="4.5" y="8.5" width="4" height="3.5" fill="#bdbdbd" stroke="#8a8886" stroke-width="1"/><rect x="4.5" y="15" width="4" height="3.5" fill="#bdbdbd" stroke="#8a8886" stroke-width="1"/><path d="M12.5 11.5 h11 l-3.8 4.5 v6 h-3.4 v-6 Z" fill="#fff" stroke="#3b3a39" stroke-width="1.4"/></svg>
<svg class="a" style="left:1253.00px;top:366.20px;" width="23" height="23" viewBox="0 0 23 23"><rect x="0.8" y="1" width="21.5" height="21" fill="#fafafa" stroke="#3b3a39" stroke-width="1.5"/><rect x="1.5" y="1.7" width="20" height="3.3" fill="#bdbdbd" stroke="#bdbdbd" stroke-width="0"/><path d="M1 5 H22 M1 10.5 H22 M1 16 H22" stroke="#8a8886" stroke-width="1.3"/><path d="M7.7 5 V22 M15 5 V22" stroke="#3b3a39" stroke-width="1.3"/></svg>
<svg class="a" style="left:1288.50px;top:366.20px;" width="23" height="23" viewBox="0 0 23 23"><rect x="0.8" y="1" width="21.5" height="21" fill="#fafafa" stroke="#3b3a39" stroke-width="1.2"/><rect x="1.5" y="1.7" width="20" height="3.3" fill="#bdbdbd" stroke="#bdbdbd" stroke-width="0"/><rect x="15" y="5" width="7" height="17" fill="#7db9ee" stroke="#1a73c9" stroke-width="0"/><rect x="1" y="16" width="21" height="6" fill="#7db9ee" stroke="#1a73c9" stroke-width="0"/><path d="M1 5 H22 M1 10.5 H22 M1 16 H22 M7.7 5 V22 M15 5 V22" stroke="#fff" stroke-width="1"/><rect x="0.8" y="1" width="21.500000" height="21" fill="none" stroke="#1a73c9" stroke-width="1.2"/></svg>
<svg class="a" style="left:1324.00px;top:366.20px;" width="23" height="23" viewBox="0 0 23 23"><text x="5" y="19.5" font-size="20" font-weight="700" font-family="'Liberation Sans',sans-serif" fill="#1a7fd1" textLength="12.5" lengthAdjust="spacingAndGlyphs">R</text></svg>
<svg class="a" style="left:1359.50px;top:366.20px;" width="23" height="23" viewBox="0 0 23 23"><text x="0" y="17.5" font-size="21" font-weight="700" font-family="'Liberation Sans',sans-serif" fill="#1a7fd1" textLength="23" lengthAdjust="spacingAndGlyphs">Py</text></svg>
<svg class="a" style="left:1395.00px;top:366.20px;" width="23" height="23" viewBox="0 0 23 23"><path d="M1 0 V22 M0 22 H23" stroke="#3b3a39" stroke-width="1.5" fill="none"/><path d="M1.5 4.5 H17" stroke="#1a73c9" stroke-width="1.3"/><circle cx="19" cy="4.5" r="2.6" fill="#7db9ee" stroke="#1a73c9" stroke-width="1.2"/><path d="M1.5 10.5 H12 M1.5 16 H7" stroke="#8a8886" stroke-width="1.2"/><rect x="12" y="9" width="3" height="3" fill="#fafafa" stroke="#8a8886" stroke-width="1"/><rect x="7" y="14.5" width="3" height="3" fill="#fafafa" stroke="#8a8886" stroke-width="1"/></svg>
<svg class="a" style="left:1430.50px;top:366.20px;" width="23" height="23" viewBox="0 0 23 23"><path d="M8 11.5 H12 M12 3.5 V19.5 M12 3.5 H15 M12 11.5 H15 M12 19.5 H15" stroke="#3b3a39" stroke-width="1.5" fill="none"/><rect x="0.7" y="8.8" width="7.5" height="5.4" fill="#7db9ee" stroke="#1a73c9" stroke-width="1.2"/><rect x="15" y="0.8" width="7.3" height="5.4" fill="#7db9ee" stroke="#1a73c9" stroke-width="1.2"/><rect x="15" y="8.8" width="7.3" height="5.4" fill="#7db9ee" stroke="#1a73c9" stroke-width="1.2"/><rect x="15" y="16.8" width="7.3" height="5.4" fill="#7db9ee" stroke="#1a73c9" stroke-width="1.2"/></svg>
<svg class="a" style="left:1466.00px;top:366.20px;" width="23" height="23" viewBox="0 0 23 23"><path d="M1 2 H22.3 V16.5 H10 L4.5 21.8 V16.5 H1 Z" fill="#fff" stroke="#1a73c9" stroke-width="1.7" stroke-linejoin="miter"/></svg>
<svg class="a" style="left:1253.00px;top:398.75px;" width="23" height="23" viewBox="0 0 23 23"><path d="M3 1 H14 L19.5 6.5 V22.5 H3 Z M14 1 V6.5 H19.5" fill="#fafafa" stroke="#3b3a39" stroke-width="1.5"/><circle cx="3.7" cy="9.5" r="2.1" fill="#7db9ee" stroke="#1a73c9" stroke-width="1.1"/><path d="M7.5 10.5 H15.5 M7.5 14.5 H13" stroke="#4a9fe6" stroke-width="1.2"/></svg>
<svg class="a" style="left:1288.50px;top:398.75px;" width="23" height="23" viewBox="0 0 23 23"><path d="M5.5 2 H18 V8 C18 13 14.5 15.5 11.75 16.5 C9 15.5 5.5 13 5.5 8 Z M5.5 4 H1.2 C1 8 2.5 11 6.5 11.8 M18 4 H22.3 C22.5 8 21 11 17 11.8 M11.75 16.5 V20 M7.5 20.5 H16" fill="none" stroke="#3b3a39" stroke-width="1.5"/><rect x="5.5" y="1" width="12.5" height="2.6" fill="#7db9ee" stroke="#1a73c9" stroke-width="1"/><rect x="6" y="20" width="11.500000" height="2.6" rx="1.3" fill="#7db9ee" stroke="#1a73c9" stroke-width="1"/></svg>
<svg class="a" style="left:1324.00px;top:398.75px;" width="23" height="23" viewBox="0 0 23 23"><path d="M3 1 H14.5 L20.5 7 V23 H3 Z M14.5 1 V7 H20.5" fill="#fafafa" stroke="#3b3a39" stroke-width="1.5"/><rect x="6" y="14" width="2.8" height="6.5" fill="#3b3a39" stroke="#3b3a39" stroke-width="0"/><rect x="10.3" y="16.5" width="2.8" height="4" fill="#3b3a39" stroke="#3b3a39" stroke-width="0"/><rect x="14.6" y="11" width="2.8" height="9.5" fill="#3b3a39" stroke="#3b3a39" stroke-width="0"/></svg>
<svg class="a" style="left:1359.50px;top:398.75px;" width="23" height="23" viewBox="0 0 23 23"><path d="M10 3.5 H22.3 V20 H0.8 V13" fill="#fafafa" stroke="#3b3a39" stroke-width="1.5"/><text x="5.5" y="14.5" font-size="10.5" font-family="'Liberation Sans',sans-serif" fill="#2b88d8" textLength="15" lengthAdjust="spacingAndGlyphs">123</text><path d="M3.500000 17.2 H19.5" stroke="#8a8886" stroke-width="1"/><path d="M5.5 0 H11 L8 5 H11.5 L1.5 15.5 L4.8 7.5 H1.3 Z" fill="#f7b548" stroke="#d9730d" stroke-width="0.9" stroke-linejoin="miter"/></svg>
<svg class="a" style="left:1395.00px;top:398.75px;" width="23" height="23" viewBox="0 0 23 23"><rect x="12.5" y="1.5" width="7" height="7" fill="#fafafa" stroke="#8a8886" stroke-width="1.2"/><rect x="7" y="7.5" width="4" height="3.5" fill="#7db9ee" stroke="#1a73c9" stroke-width="0.8"/><rect x="2" y="12.5" width="7.5" height="7.5" fill="#fafafa" stroke="#8a8886" stroke-width="1.2"/><path d="M10 12 V21 H2" stroke="#8a8886" stroke-width="1" fill="none"/><path d="M12 11.5 h11 l-3.8 4.5 v6 h-3.4 v-6 Z" fill="#fff" stroke="#3b3a39" stroke-width="1.4"/><path d="M5.5 0 H11 L8 5 H11.5 L1.5 15.5 L4.8 7.5 H1.3 Z" fill="#f7b548" stroke="#d9730d" stroke-width="0.9" stroke-linejoin="miter"/></svg>
<svg class="a" style="left:1430.50px;top:398.75px;" width="23" height="23" viewBox="0 0 23 23"><path d="M10.500000 2 H22 V9 M2 13 V21.5 H13" fill="none" stroke="#3b3a39" stroke-width="1.4"/><text x="7" y="17" font-size="14" font-family="'Liberation Sans',sans-serif" fill="#2b88d8">A</text><path d="M12 11.5 h11 l-3.8 4.5 v6 h-3.4 v-6 Z" fill="#fff" stroke="#3b3a39" stroke-width="1.4"/><path d="M5.5 0 H11 L8 5 H11.5 L1.5 15.5 L4.8 7.5 H1.3 Z" fill="#f7b548" stroke="#d9730d" stroke-width="0.9" stroke-linejoin="miter"/></svg>
<svg class="a" style="left:1466.00px;top:398.75px;" width="23" height="23" viewBox="0 0 23 23"><path d="M10.5 2 H22 V9 M2 13 V21.500000 H13" fill="none" stroke="#3b3a39" stroke-width="1.4"/><path d="M9 7 H18 M8.5 15 H11.5" stroke="#8a8886" stroke-width="1"/><rect x="5" y="13.5" width="2.5" height="2.5" fill="#fafafa" stroke="#8a8886" stroke-width="1"/><path d="M12 11.5 h11 l-3.8 4.5 v6 h-3.4 v-6 Z" fill="#fff" stroke="#3b3a39" stroke-width="1.4"/><path d="M5.5 0 H11 L8 5 H11.5 L1.5 15.5 L4.8 7.5 H1.3 Z" fill="#f7b548" stroke="#d9730d" stroke-width="0.9" stroke-linejoin="miter"/></svg>
<svg class="a" style="left:1253.00px;top:431.30px;" width="23" height="23" viewBox="0 0 23 23"><path d="M8 0.9 H22.5 V9.500000 M0.9 11.7 V22.3 H14.7" fill="none" stroke="#1a73c9" stroke-width="1.9"/><path d="M9 2.8 H20.600000 V9 M2.8 12 V20.400000 H12" fill="none" stroke="#8cc0ee" stroke-width="1"/><path d="M21 4 L17 4.500000 L14.5 5.5 L13.5 8.5 L11.5 9.5 L10.8 13 L9.2 15.5 L8.3 18.5 L8.8 20.5 L13.3 21 L13 18.5 L14.2 16.5 L15.8 14.5 L15.5 12 L17 10.5 L18.5 8.5 L21 7.5 Z" fill="#7db9ee" stroke="#1a73c9" stroke-width="0.5"/><path d="M-0.8 2 A3.700000 3.7 0 0 1 6.6 2 V8.6 L2.9 12.4 L-0.8 8.6 Z" fill="#e06c00"/><ellipse cx="2.9" cy="3.4" rx="1.7" ry="1.3" fill="#fff"/><circle cx="19.6" cy="19.300000" r="3.4" fill="#e06c00"/><circle cx="22.1" cy="13" r="1.9" fill="#e06c00"/></svg>
<svg class="a" style="left:1288.50px;top:431.30px;" width="23" height="23" viewBox="0 0 23 23"><path d="M9.8 1.2 H14.2 L22.4 11.2 L14.2 21.2 H9.8 L1 11.2 Z" fill="#fbfbfb" stroke="#9b2fae" stroke-width="1.4" stroke-linejoin="round"/><path d="M11.8 1.5 L8.6 5.6 L18 16.800000 M11.8 20.9 L8.600000 16.8 L18 5.6" fill="none" stroke="#9b2fae" stroke-width="1.3" stroke-linejoin="round"/></svg>
<svg class="a" style="left:1324.00px;top:431.30px;" width="23" height="23" viewBox="0 0 23 23"><path d="M1.2 1.4 H14.6 L22.3 10.3 L15 19.400000 H1.2 L7 10.3 Z" fill="#fbfbfb" stroke="#1a7fd1" stroke-width="1.5" stroke-linejoin="round"/><path d="M14.6 1.6 L7 10.3 M18.6 6.5 L8.5 19" stroke="#1a7fd1" stroke-width="1.3"/></svg>
<svg class="a" style="left:1359.50px;top:431.30px;" width="23" height="23" viewBox="0 0 23 23"><circle cx="3.7" cy="10.300000" r="1.15" fill="#252423"/><circle cx="11.2" cy="10.3" r="1.15" fill="#252423"/><circle cx="18.7" cy="10.3" r="1.15" fill="#252423"/></svg>
<div class="a" style="left:1249.00px;top:363.20px;width:30.00px;height:30.00px;border:1.3px solid #252423;box-sizing:border-box;"></div>
<div class="t" style="left:1241.26px;top:477.00px;font-size:14.62px;letter-spacing:0.177px;color:#252423;">Columns</div>
<div class="a" style="left:1242.00px;top:498.00px;width:258.50px;height:175.00px;border:1px dashed #484644;border-radius:3px;box-sizing:border-box;"></div>
<div class="a" style="left:1248.00px;top:504.50px;width:246.70px;height:36.00px;background:#faf9f8;border:1px solid #8a8886;border-radius:4px;box-sizing:border-box;"></div>
<div class="t" style="left:1255.68px;top:516.00px;font-size:14.62px;letter-spacing:-0.396px;color:#252423;">Year</div>
<svg class="a" style="left:1432.00px;top:515.00px;" width="16" height="16" viewBox="0 0 16 16"><path d="M1 1 L15 15 M15 1 L1 15" stroke="#252423" stroke-width="1.4" fill="none"/></svg>
<div class="a" style="left:1457.30px;top:513.50px;width:1.50px;height:18.00px;background:#252423;"></div>
<svg class="a" style="left:1472.00px;top:515.00px;" width="10" height="16" viewBox="0 0 10 16"><path d="M1.5 1 L8.5 8 L1.5 15" stroke="#252423" stroke-width="1.3" fill="none"/></svg>
<div class="a" style="left:1248.00px;top:546.30px;width:246.70px;height:36.00px;background:#faf9f8;border:1px solid #8a8886;border-radius:4px;box-sizing:border-box;"></div>
<div class="t" style="left:1255.26px;top:558.00px;font-size:14.62px;letter-spacing:0.227px;color:#252423;">Country</div>
<svg class="a" style="left:1432.00px;top:556.80px;" width="16" height="16" viewBox="0 0 16 16"><path d="M1 1 L15 15 M15 1 L1 15" stroke="#252423" stroke-width="1.4" fill="none"/></svg>
<div class="a" style="left:1457.30px;top:555.30px;width:1.50px;height:18.00px;background:#252423;"></div>
<svg class="a" style="left:1472.00px;top:556.80px;" width="10" height="16" viewBox="0 0 10 16"><path d="M1.5 1 L8.5 8 L1.5 15" stroke="#252423" stroke-width="1.3" fill="none"/></svg>
<div class="a" style="left:1248.00px;top:588.10px;width:246.70px;height:36.00px;background:#faf9f8;border:1px solid #8a8886;border-radius:4px;box-sizing:border-box;"></div>
<div class="t" style="left:1254.80px;top:600.00px;font-size:14.62px;letter-spacing:-0.014px;color:#252423;">Literacy Rate Measure</div>
<svg class="a" style="left:1432.00px;top:598.60px;" width="16" height="16" viewBox="0 0 16 16"><path d="M1 1 L15 15 M15 1 L1 15" stroke="#252423" stroke-width="1.4" fill="none"/></svg>
<div class="a" style="left:1457.30px;top:597.10px;width:1.50px;height:18.00px;background:#252423;"></div>
<svg class="a" style="left:1472.00px;top:598.60px;" width="10" height="16" viewBox="0 0 10 16"><path d="M1.5 1 L8.5 8 L1.5 15" stroke="#252423" stroke-width="1.3" fill="none"/></svg>
<div class="a" style="left:1248.00px;top:630.30px;width:246.70px;height:36.50px;background:#fff;border:1px solid #8a8886;border-radius:4px;box-sizing:border-box;"></div>
<div class="t" style="left:1335.77px;top:641.00px;font-size:15.02px;letter-spacing:0.294px;color:#252423;-webkit-text-stroke:0.42px #252423;">+Add data</div>
<div class="t" style="left:1520.90px;top:172.00px;font-size:19.50px;letter-spacing:0.403px;color:#252423;-webkit-text-stroke:0.55px #252423;">Data</div>
<div class="a" style="left:1825.00px;top:179.00px;width:2.20px;height:2.20px;background:#252423;border-radius:50%;"></div>
<div class="a" style="left:1832.60px;top:179.00px;width:2.20px;height:2.20px;background:#252423;border-radius:50%;"></div>
<div class="a" style="left:1840.20px;top:179.00px;width:2.20px;height:2.20px;background:#252423;border-radius:50%;"></div>
<svg class="a" style="left:1853.50px;top:172.00px;" width="16" height="16" viewBox="0 0 16 16"><path d="M1 0.5 L8 8 L1 15.5 M8 0.5 L15 8 L8 15.5" fill="none" stroke="#252423" stroke-width="1"/></svg>
<div class="a" style="left:1517.00px;top:213.50px;width:356.50px;height:29.30px;background:#fff;border:1px solid #d1d1d1;border-bottom:1.5px solid #605e5c;border-radius:5px;box-sizing:border-box;"></div>
<svg class="a" style="left:1532.00px;top:219.00px;" width="19" height="19" viewBox="0 0 19 19"><circle cx="7.6" cy="7.6" r="6.2" fill="none" stroke="#484644" stroke-width="1.3"/><path d="M12 12 L18 18" stroke="#484644" stroke-width="1.4"/></svg>
<div class="t" style="left:1558.72px;top:222.00px;font-size:17.16px;letter-spacing:-0.396px;color:#605e5c;">Search</div>
<svg class="a" style="left:1528.00px;top:264.00px;" width="16" height="9" viewBox="0 0 16 9"><path d="M1 1 L8 8 L15 1" fill="none" stroke="#323130" stroke-width="1.2"/></svg>
<svg class="a" style="left:1548.00px;top:261.00px;" width="16" height="16" viewBox="0 0 16 16"><rect x="1" y="1" width="14" height="13.5" rx="2.8" fill="none" stroke="#252423" stroke-width="1.5"/><path d="M1 5.5 H15 M1 10 H15 M5.7 1 V14.5 M10.3 1 V14.5" stroke="#252423" stroke-width="1.3"/></svg>
<div class="a" style="left:1556.00px;top:268.80px;width:15.00px;height:15.00px;background:#117865;border-radius:50%;"></div>
<svg class="a" style="left:1559.50px;top:272.50px;" width="8" height="8" viewBox="0 0 8 8"><path d="M1 4.2 L3.2 6.3 L7 2" fill="none" stroke="#fff" stroke-width="1.4"/></svg>
<div class="t" style="left:1570.76px;top:263.00px;font-size:14.62px;letter-spacing:0.060px;color:#252423;">Countries</div>
<div class="a" style="left:1567.00px;top:292.00px;width:15.00px;height:14.70px;background:#fdfdfd;border:1px solid #8a8886;border-radius:2.5px;box-sizing:border-box;"></div>
<svg class="a" style="left:1592.50px;top:291.00px;" width="14" height="16" viewBox="0 0 14 16"><path d="M12.6 3.2 V1 H1.3 L7.6 8 L1.3 15 H12.6 V12.8" fill="none" stroke="#252423" stroke-width="1.4" stroke-linejoin="miter"/></svg>
<div class="t" style="left:1614.97px;top:293.00px;font-size:14.62px;letter-spacing:-0.024px;color:#252423;">Area (sq km)</div>
<div class="a" style="left:1567.00px;top:322.00px;width:15.00px;height:14.70px;background:#fdfdfd;border:1px solid #8a8886;border-radius:2.5px;box-sizing:border-box;"></div>
<svg class="a" style="left:1592.50px;top:320.30px;" width="15" height="17.5" viewBox="0 0 15 17.5"><rect x="1" y="1" width="13" height="15.5" rx="2.8" fill="none" stroke="#252423" stroke-width="1.5"/><rect x="4" y="3.8" width="7" height="2.6" rx="0.6" fill="none" stroke="#252423" stroke-width="1.2"/><rect x="3.3" y="9" width="1.9" height="1.9" fill="#252423"/><rect x="3.3" y="12.1" width="1.9" height="1.9" fill="#252423"/><rect x="6.4" y="9" width="1.9" height="1.9" fill="#252423"/><rect x="6.4" y="12.1" width="1.9" height="1.9" fill="#252423"/><rect x="9.5" y="9" width="1.9" height="1.9" fill="#252423"/><rect x="9.5" y="12.1" width="1.9" height="1.9" fill="#252423"/></svg>
<div class="t" style="left:1614.26px;top:323.00px;font-size:14.62px;letter-spacing:-0.090px;color:#252423;">Check Type Measure</div>
<div class="a" style="left:1567.00px;top:352.00px;width:15.00px;height:14.70px;background:#fdfdfd;border:1px solid #8a8886;border-radius:2.5px;box-sizing:border-box;"></div>
<svg class="a" style="left:1592.50px;top:350.30px;" width="15" height="17.5" viewBox="0 0 15 17.5"><rect x="1" y="1" width="13" height="15.5" rx="2.8" fill="none" stroke="#252423" stroke-width="1.5"/><rect x="4" y="3.8" width="7" height="2.6" rx="0.6" fill="none" stroke="#252423" stroke-width="1.2"/><rect x="3.3" y="9" width="1.9" height="1.9" fill="#252423"/><rect x="3.3" y="12.1" width="1.9" height="1.9" fill="#252423"/><rect x="6.4" y="9" width="1.9" height="1.9" fill="#252423"/><rect x="6.4" y="12.1" width="1.9" height="1.9" fill="#252423"/><rect x="9.5" y="9" width="1.9" height="1.9" fill="#252423"/><rect x="9.5" y="12.1" width="1.9" height="1.9" fill="#252423"/></svg>
<div class="t" style="left:1614.26px;top:353.00px;font-size:14.62px;letter-spacing:-0.027px;color:#252423;">Check Type Measure-II</div>
<div class="a" style="left:1567.00px;top:382.00px;width:15.00px;height:14.70px;background:#117865;border-radius:2.5px;"></div>
<svg class="a" style="left:1568.50px;top:383.80px;" width="12" height="11" viewBox="0 0 12 11"><path d="M1.3 5.5 L4.6 8.8 L10.8 2" fill="none" stroke="#fff" stroke-width="1.4"/></svg>
<div class="t" style="left:1614.26px;top:383.00px;font-size:14.62px;letter-spacing:0.210px;color:#252423;">Country</div>
<div class="a" style="left:1567.00px;top:412.00px;width:15.00px;height:14.70px;background:#fdfdfd;border:1px solid #8a8886;border-radius:2.5px;box-sizing:border-box;"></div>
<svg class="a" style="left:1592.50px;top:410.30px;" width="15" height="17.5" viewBox="0 0 15 17.5"><rect x="1" y="1" width="13" height="15.5" rx="2.8" fill="none" stroke="#252423" stroke-width="1.5"/><rect x="4" y="3.8" width="7" height="2.6" rx="0.6" fill="none" stroke="#252423" stroke-width="1.2"/><rect x="3.3" y="9" width="1.9" height="1.9" fill="#252423"/><rect x="3.3" y="12.1" width="1.9" height="1.9" fill="#252423"/><rect x="6.4" y="9" width="1.9" height="1.9" fill="#252423"/><rect x="6.4" y="12.1" width="1.9" height="1.9" fill="#252423"/><rect x="9.5" y="9" width="1.9" height="1.9" fill="#252423"/><rect x="9.5" y="12.1" width="1.9" height="1.9" fill="#252423"/></svg>
<div class="t" style="left:1614.26px;top:413.00px;font-size:14.62px;letter-spacing:0.145px;color:#252423;">Country Image Measure</div>
<div class="a" style="left:1567.00px;top:442.00px;width:15.00px;height:14.70px;background:#fdfdfd;border:1px solid #8a8886;border-radius:2.5px;box-sizing:border-box;"></div>
<svg class="a" style="left:1592.50px;top:441.00px;" width="14" height="16" viewBox="0 0 14 16"><path d="M12.6 3.2 V1 H1.3 L7.6 8 L1.3 15 H12.6 V12.8" fill="none" stroke="#252423" stroke-width="1.4" stroke-linejoin="miter"/></svg>
<div class="t" style="left:1614.26px;top:443.00px;font-size:14.62px;letter-spacing:-0.185px;color:#252423;">GDP (Billion USD)</div>
<div class="a" style="left:1567.00px;top:472.00px;width:15.00px;height:14.70px;background:#fdfdfd;border:1px solid #8a8886;border-radius:2.5px;box-sizing:border-box;"></div>
<svg class="a" style="left:1592.50px;top:470.30px;" width="15" height="17.5" viewBox="0 0 15 17.5"><rect x="1" y="1" width="13" height="15.5" rx="2.8" fill="none" stroke="#252423" stroke-width="1.5"/><rect x="4" y="3.8" width="7" height="2.6" rx="0.6" fill="none" stroke="#252423" stroke-width="1.2"/><rect x="3.3" y="9" width="1.9" height="1.9" fill="#252423"/><rect x="3.3" y="12.1" width="1.9" height="1.9" fill="#252423"/><rect x="6.4" y="9" width="1.9" height="1.9" fill="#252423"/><rect x="6.4" y="12.1" width="1.9" height="1.9" fill="#252423"/><rect x="9.5" y="9" width="1.9" height="1.9" fill="#252423"/><rect x="9.5" y="12.1" width="1.9" height="1.9" fill="#252423"/></svg>
<div class="t" style="left:1614.26px;top:473.00px;font-size:14.62px;letter-spacing:-0.181px;color:#252423;">GDP Measure</div>
<div class="a" style="left:1567.00px;top:502.00px;width:15.00px;height:14.70px;background:#fdfdfd;border:1px solid #8a8886;border-radius:2.5px;box-sizing:border-box;"></div>
<svg class="a" style="left:1592.50px;top:500.30px;" width="15" height="17.5" viewBox="0 0 15 17.5"><rect x="1" y="1" width="13" height="15.5" rx="2.8" fill="none" stroke="#252423" stroke-width="1.5"/><rect x="4" y="3.8" width="7" height="2.6" rx="0.6" fill="none" stroke="#252423" stroke-width="1.2"/><rect x="3.3" y="9" width="1.9" height="1.9" fill="#252423"/><rect x="3.3" y="12.1" width="1.9" height="1.9" fill="#252423"/><rect x="6.4" y="9" width="1.9" height="1.9" fill="#252423"/><rect x="6.4" y="12.1" width="1.9" height="1.9" fill="#252423"/><rect x="9.5" y="9" width="1.9" height="1.9" fill="#252423"/><rect x="9.5" y="12.1" width="1.9" height="1.9" fill="#252423"/></svg>
<div class="t" style="left:1614.26px;top:503.00px;font-size:14.62px;letter-spacing:-0.039px;color:#252423;">GDP Measure-II</div>
<div class="a" style="left:1567.00px;top:532.00px;width:15.00px;height:14.70px;background:#fdfdfd;border:1px solid #8a8886;border-radius:2.5px;box-sizing:border-box;"></div>
<svg class="a" style="left:1592.50px;top:531.00px;" width="14" height="16" viewBox="0 0 14 16"><path d="M12.6 3.2 V1 H1.3 L7.6 8 L1.3 15 H12.6 V12.8" fill="none" stroke="#252423" stroke-width="1.4" stroke-linejoin="miter"/></svg>
<div class="t" style="left:1613.80px;top:533.00px;font-size:14.62px;letter-spacing:-0.123px;color:#252423;">Literacy Rate (%)</div>
<div class="a" style="left:1518.00px;top:554.30px;width:355.00px;height:30.00px;background:#e1dfdd;border-radius:4px;"></div>
<div class="a" style="left:1518.00px;top:554.30px;width:4.00px;height:30.00px;background:#117865;border-radius:4px 0 0 4px;"></div>
<div class="a" style="left:1567.00px;top:562.00px;width:15.00px;height:14.70px;background:#117865;border-radius:2.5px;"></div>
<svg class="a" style="left:1568.50px;top:563.80px;" width="12" height="11" viewBox="0 0 12 11"><path d="M1.3 5.5 L4.6 8.8 L10.8 2" fill="none" stroke="#fff" stroke-width="1.4"/></svg>
<svg class="a" style="left:1592.50px;top:560.30px;" width="15" height="17.5" viewBox="0 0 15 17.5"><rect x="1" y="1" width="13" height="15.5" rx="2.8" fill="none" stroke="#252423" stroke-width="1.5"/><rect x="4" y="3.8" width="7" height="2.6" rx="0.6" fill="none" stroke="#252423" stroke-width="1.2"/><rect x="3.3" y="9" width="1.9" height="1.9" fill="#252423"/><rect x="3.3" y="12.1" width="1.9" height="1.9" fill="#252423"/><rect x="6.4" y="9" width="1.9" height="1.9" fill="#252423"/><rect x="6.4" y="12.1" width="1.9" height="1.9" fill="#252423"/><rect x="9.5" y="9" width="1.9" height="1.9" fill="#252423"/><rect x="9.5" y="12.1" width="1.9" height="1.9" fill="#252423"/></svg>
<div class="t" style="left:1613.80px;top:563.00px;font-size:14.62px;letter-spacing:-0.044px;color:#252423;">Literacy Rate Measure</div>
<div class="a" style="left:1567.00px;top:592.00px;width:15.00px;height:14.70px;background:#fdfdfd;border:1px solid #8a8886;border-radius:2.5px;box-sizing:border-box;"></div>
<svg class="a" style="left:1592.50px;top:591.00px;" width="14" height="16" viewBox="0 0 14 16"><path d="M12.6 3.2 V1 H1.3 L7.6 8 L1.3 15 H12.6 V12.8" fill="none" stroke="#252423" stroke-width="1.4" stroke-linejoin="miter"/></svg>
<div class="t" style="left:1613.80px;top:593.00px;font-size:14.62px;letter-spacing:0.271px;color:#252423;">Population (Millions)</div>
<div class="a" style="left:1567.00px;top:622.00px;width:15.00px;height:14.70px;background:#117865;border-radius:2.5px;"></div>
<svg class="a" style="left:1568.50px;top:623.80px;" width="12" height="11" viewBox="0 0 12 11"><path d="M1.3 5.5 L4.6 8.8 L10.8 2" fill="none" stroke="#fff" stroke-width="1.4"/></svg>
<svg class="a" style="left:1592.50px;top:621.00px;" width="14" height="16" viewBox="0 0 14 16"><path d="M12.6 3.2 V1 H1.3 L7.6 8 L1.3 15 H12.6 V12.8" fill="none" stroke="#252423" stroke-width="1.4" stroke-linejoin="miter"/></svg>
<div class="t" style="left:1614.68px;top:623.00px;font-size:14.62px;letter-spacing:-0.729px;color:#252423;">Year</div>
<svg class="a" style="left:1530.00px;top:651.00px;" width="10" height="16" viewBox="0 0 10 16"><path d="M1.5 1 L8.5 8 L1.5 15" stroke="#323130" stroke-width="1.2" fill="none"/></svg>
<svg class="a" style="left:1548.00px;top:651.50px;" width="16" height="16" viewBox="0 0 16 16"><rect x="1" y="1" width="14" height="13.5" rx="2.8" fill="none" stroke="#252423" stroke-width="1.5"/><path d="M1 5.5 H15 M1 10 H15 M5.7 1 V14.5 M10.3 1 V14.5" stroke="#252423" stroke-width="1.3"/></svg>
<div class="t" style="left:1570.26px;top:653.00px;font-size:14.62px;letter-spacing:-0.111px;color:#252423;">CurrencyCodes</div>
<div class="a" style="left:1880.00px;top:156.00px;width:38.50px;height:40.00px;background:#e1dfdd;border:1px solid #605e5c;box-sizing:border-box;"></div>
<div class="a" style="left:1880.00px;top:195.00px;width:38.50px;height:41.00px;background:#e1dfdd;border:1px solid #605e5c;box-sizing:border-box;"></div>
<svg class="a" style="left:1889.00px;top:165.00px;" width="22" height="24" viewBox="0 0 22 24"><path d="M3 5 V19 C3 23.5 20 23.5 20 19 V5" fill="#f8f8f8" stroke="#323130" stroke-width="1.4"/><ellipse cx="11.5" cy="5" rx="8.5" ry="3.5" fill="#fcfcfc" stroke="#323130" stroke-width="1.4"/></svg>
<svg class="a" style="left:1888.00px;top:204.00px;" width="26" height="26" viewBox="0 0 26 26"><path d="M2.5 23 V9 H8 V23 M8 23 V2 H14 V23 M14 12 V8 H19 V10" fill="none" stroke="#323130" stroke-width="1.4"/><path d="M1 23 H14" stroke="#323130" stroke-width="1.4"/><ellipse cx="19.3" cy="12.5" rx="4.6" ry="2" fill="#fde3c8" stroke="#d9730d" stroke-width="1.3"/><path d="M14.7 12.5 V21.5 C14.7 24.3 23.9 24.3 23.9 21.5 V12.5" fill="#fde3c8" stroke="#d9730d" stroke-width="1.3"/></svg>
<svg class="a" style="left:1887.00px;top:243.00px;" width="28" height="28" viewBox="0 0 28 28"><path d="M3 19 V9 H8 V19 M8 12 V2.5 H14 V12 M14 9 V6.5 H19 V9" fill="none" stroke="#323130" stroke-width="1.4"/><path d="M13 18 L23.5 6 L25.5 7.8 L16 20.5 Z" fill="#fff" stroke="#323130" stroke-width="1.2"/><path d="M5 24.5 C9 24 10 21.5 11 19.5 C13 17.5 16 19 16 21.5 C15.5 25.5 9.5 27 5 24.5 Z" fill="#4a90d9" stroke="#2b6cb0" stroke-width="0.8"/></svg>
<svg class="a" style="left:1890.00px;top:284.00px;" width="20" height="25" viewBox="0 0 20 25"><path d="M2.5 1.5 H17.5 V22.5 L10 16 L2.5 22.5 Z" fill="none" stroke="#323130" stroke-width="1.5"/></svg>
<svg class="a" style="left:1886.00px;top:322.00px;" width="28" height="28" viewBox="0 0 28 28"><path d="M12 7 H21 V14 M6 19 V24 H16 M3.5 20.5 V27 H14" fill="none" stroke="#484644" stroke-width="1.4"/><path d="M13 16.5 H27 L22 22 V27.5 H18.5 V22 Z" fill="#fff" stroke="#323130" stroke-width="1.4"/><path d="M15 6 A6 6 0 0 0 3.5 6.5 M2.5 11 A6 6 0 0 0 14.5 12" fill="none" stroke="#2e9a47" stroke-width="1.7"/><path d="M15.8 2 V6.8 H11 M1.8 15.5 V10.7 H6.5" fill="none" stroke="#2e9a47" stroke-width="1.5"/></svg>
<svg class="a" style="left:1887.00px;top:363.00px;" width="28" height="28" viewBox="0 0 28 28"><rect x="10" y="2" width="15.5" height="15.5" fill="#f9c77c" stroke="#e8a03c" stroke-width="1"/><rect x="2" y="12.5" width="14" height="12.5" fill="#fff" stroke="#484644" stroke-width="1.4"/><path d="M14.5 8.5 L25 18.5 L20.6 19 L23 24.2 L20.8 25.2 L18.5 20.2 L15 23 Z" fill="#fff" stroke="#323130" stroke-width="1.2"/></svg>
<svg class="a" style="left:1889.00px;top:404.00px;" width="22" height="22" viewBox="0 0 22 22"><path d="M11 0.5 V21.5 M0.5 11 H21.5" stroke="#201f1e" stroke-width="1.6"/></svg>
<div class="a" style="left:1881.00px;top:906.50px;width:37.00px;height:1.00px;background:#e1dfdd;"></div>
<svg class="a" style="left:1888.00px;top:913.50px;" width="26" height="26" viewBox="0 0 26 26"><path d="M10.27 2.76 L11.04 0.86 L14.96 0.86 L15.73 2.76 L18.32 3.83 L20.20 3.03 L22.97 5.80 L22.17 7.68 L23.24 10.27 L25.14 11.04 L25.14 14.96 L23.24 15.73 L22.17 18.32 L22.97 20.20 L20.20 22.97 L18.32 22.17 L15.73 23.24 L14.96 25.14 L11.04 25.14 L10.27 23.24 L7.68 22.17 L5.80 22.97 L3.03 20.20 L3.83 18.32 L2.76 15.73 L0.86 14.96 L0.86 11.04 L2.76 10.27 L3.83 7.68 L3.03 5.80 L5.80 3.03 L7.68 3.83 Z" fill="none" stroke="#252423" stroke-width="1.5" stroke-linejoin="round"/><circle cx="13" cy="13" r="4" fill="none" stroke="#252423" stroke-width="1.5"/></svg>
<div class="a" style="left:0.00px;top:0.00px;width:1918.00px;height:155.50px;background:#f9f9f9;"></div>
<div class="a" style="left:769.50px;top:0.00px;width:95.50px;height:37.00px;background:#ffffff;"></div>
<div class="a" style="left:870.00px;top:0.00px;width:123.75px;height:37.00px;background:#ffffff;"></div>
<div class="a" style="left:998.75px;top:0.00px;width:123.00px;height:37.00px;background:#ffffff;"></div>
<div class="a" style="left:1126.75px;top:0.00px;width:148.75px;height:37.00px;background:#ffffff;"></div>
<div class="t" style="left:27.06px;top:11.00px;font-size:17.55px;letter-spacing:-0.187px;color:#252423;">File</div>
<div class="t" style="left:100.56px;top:11.00px;font-size:17.55px;letter-spacing:0.468px;color:#252423;">Home</div>
<div class="t" style="left:186.38px;top:11.00px;font-size:17.55px;letter-spacing:0.171px;color:#252423;">Insert</div>
<div class="t" style="left:269.56px;top:11.00px;font-size:17.55px;letter-spacing:0.621px;color:#252423;">Modeling</div>
<div class="t" style="left:383.92px;top:11.00px;font-size:17.55px;letter-spacing:-0.230px;color:#252423;">View</div>
<div class="t" style="left:459.67px;top:11.00px;font-size:17.55px;letter-spacing:0.267px;color:#252423;">Optimize</div>
<div class="t" style="left:568.56px;top:11.00px;font-size:17.55px;letter-spacing:0.360px;color:#252423;">Help</div>
<div class="t" style="left:644.56px;top:11.00px;font-size:17.55px;letter-spacing:-0.097px;color:#252423;">External tools</div>
<div class="t" style="left:787.56px;top:11.00px;font-size:17.55px;letter-spacing:0.497px;color:#117865;-webkit-text-stroke:0.49px #117865;">Format</div>
<div class="t" style="left:887.56px;top:11.00px;font-size:17.55px;letter-spacing:0.563px;color:#117865;-webkit-text-stroke:0.49px #117865;">Data / Drill</div>
<div class="t" style="left:1017.61px;top:11.00px;font-size:17.55px;letter-spacing:0.162px;color:#117865;-webkit-text-stroke:0.49px #117865;">Table tools</div>
<div class="t" style="left:1144.31px;top:11.00px;font-size:17.55px;letter-spacing:0.258px;color:#117865;-webkit-text-stroke:0.49px #117865;">Measure tools</div>
<div class="a" style="left:1145.00px;top:34.20px;width:112.50px;height:2.90px;background:#117865;"></div>
<div class="a" style="left:1808.50px;top:4.00px;width:105.00px;height:29.50px;background:#117865;border-radius:4px;"></div>
<div class="t" style="left:1846.26px;top:10.00px;font-size:16.38px;letter-spacing:-1.060px;color:#fff;-webkit-text-stroke:0.46px #fff;">Share</div>
<svg class="a" style="left:1816.00px;top:7.00px;" width="24" height="22" viewBox="0 0 24 22"><path d="M14.5 2.5 L21 8 L14.5 13.5 V10.3 C10.5 10.3 8.3 11.8 7 14.5 C7 9.5 9.8 6 14.5 5.7 Z M10 5.5 H3.5 V19.5 H17.5 V14" fill="none" stroke="#fff" stroke-width="1.5" stroke-linejoin="miter"/></svg>
<svg class="a" style="left:1889.00px;top:13.00px;" width="16" height="12" viewBox="0 0 16 12"><path d="M2 2.5 L8 8.5 L14 2.5" fill="none" stroke="#fff" stroke-width="1.6"/></svg>
<svg class="a" style="left:1901.00px;top:139.00px;" width="16" height="12" viewBox="0 0 16 12"><path d="M2.300000 8.8 L7.6 3.300000 L12.9 8.8" fill="none" stroke="#323130" stroke-width="1.9"/></svg>
<div class="a" style="left:297.00px;top:44.00px;width:1.00px;height:109.50px;background:#d2d0ce;"></div>
<div class="a" style="left:574.00px;top:44.00px;width:1.00px;height:109.50px;background:#d2d0ce;"></div>
<div class="a" style="left:887.00px;top:44.00px;width:1.00px;height:109.50px;background:#d2d0ce;"></div>
<div class="a" style="left:1030.00px;top:44.00px;width:1.00px;height:109.50px;background:#d2d0ce;"></div>
<div class="a" style="left:0.00px;top:155.30px;width:1880.00px;height:3.20px;background:linear-gradient(#d6d6d6,rgba(238,238,238,0.6));"></div>
<div class="t" style="left:123.42px;top:142.00px;font-size:12.87px;letter-spacing:-0.220px;color:#323130;">Structure</div>
<div class="t" style="left:404.94px;top:142.00px;font-size:12.87px;letter-spacing:0.097px;color:#323130;">Formatting</div>
<div class="t" style="left:701.94px;top:142.00px;font-size:12.87px;letter-spacing:-0.126px;color:#323130;">Properties</div>
<div class="t" style="left:925.35px;top:142.00px;font-size:12.87px;letter-spacing:-0.272px;color:#323130;">Calculations</div>
<div class="t" style="left:38.75px;top:65.00px;font-size:15.21px;letter-spacing:0.283px;color:#252423;">Name</div>
<div class="t" style="left:38.75px;top:101.00px;font-size:15.21px;letter-spacing:0.127px;color:#252423;">Home table</div>
<div class="a" style="left:122.00px;top:57.00px;width:162.50px;height:29.50px;background:#fff;border:1px solid #8a8886;box-sizing:border-box;"></div>
<div class="t" style="left:127.27px;top:66.00px;font-size:15.02px;letter-spacing:-0.263px;color:#252423;">Literacy Rate Meas...</div>
<div class="a" style="left:122.00px;top:92.00px;width:162.50px;height:29.50px;background:#fff;border:1px solid #8a8886;box-sizing:border-box;"></div>
<div class="t" style="left:127.74px;top:101.00px;font-size:15.02px;letter-spacing:-0.057px;color:#252423;">Countries</div>
<svg class="a" style="left:272.00px;top:105.50px;" width="9" height="7" viewBox="0 0 9 7"><path d="M1 1.5 L4.5 5 L8 1.5" fill="none" stroke="#252423" stroke-width="1.5"/></svg>
<svg class="a" style="left:14.00px;top:61.00px;" width="22" height="22" viewBox="0 0 22 22"><path d="M2 12.5 L12.5 3.5 L19.5 2.5 L18.5 9.5 L8.5 19 Z M5.5 14 L14 6.5 M7.5 16 L16 8.5" fill="none" stroke="#484644" stroke-width="1.3" stroke-linejoin="round"/><circle cx="16.3" cy="5.7" r="0.9" fill="#484644"/></svg>
<svg class="a" style="left:14.00px;top:96.00px;" width="22" height="22" viewBox="0 0 22 22"><path d="M2 11.5 L11 3 L20 11.5 V20 H13.5 V13.5 H8.5 V20 H2 Z" fill="none" stroke="#484644" stroke-width="1.5" stroke-linejoin="round"/></svg>
<svg class="a" style="left:0.00px;top:0.00px;" width="600" height="100" viewBox="0 0 600 100"><path d="M320.8 60.8 C340 59.5 365 60.5 383.3 59.7 C396 58 405 55 416.7 53.3 C430 51.5 445 51.3 456.7 51.3 L479.2 51.3 C480 55 480 60 479.7 63.300000 C479.700000 68 479.5 71.5 478.300000 74.200000 C471 77.5 464 80.500000 456.7 82.5 C436 84 412 83.700000 390 83.7 C368 83.7 346 83.5 325.8 82.5 C323 78 321.500000 74 320.8 70 Z" fill="#ffe600"/></svg>
<div class="t" style="left:337.25px;top:65.00px;font-size:15.21px;letter-spacing:-0.063px;color:#252423;">Format</div>
<div class="a" style="left:390.00px;top:57.00px;width:162.50px;height:29.50px;background:transparent;border:1px solid #8a8886;box-sizing:border-box;background:linear-gradient(90deg,transparent 0,transparent 89px,#fff 89px);"></div>
<div class="t" style="left:395.27px;top:66.00px;font-size:15.02px;letter-spacing:0.037px;color:#252423;">Dynamic</div>
<svg class="a" style="left:540.00px;top:70.50px;" width="9" height="7" viewBox="0 0 9 7"><path d="M1 1.5 L4.5 5 L8 1.5" fill="none" stroke="#252423" stroke-width="1.5"/></svg>
<div class="t" style="left:312.34px;top:63.00px;font-size:12.19px;color:#252423;font-weight:700;">$</div>
<div class="t" style="left:319.20px;top:64.00px;font-size:12.19px;color:#252423;font-weight:700;">%</div>
<svg class="a" style="left:318.00px;top:66.00px;" width="16" height="18" viewBox="0 0 16 18"><path d="M3 15.5 L4.2 11.5 L12 3.5 L14.5 5.8 L6.8 14 Z" fill="#7fba00" stroke="#2e7d32" stroke-width="0.9"/><path d="M2.2 16.3 L3.2 13 L5.6 15.2 Z" fill="#1e6fc4"/></svg>
<div class="t" style="left:317.25px;top:96.00px;font-size:22.91px;color:#323130;">$</div>
<svg class="a" style="left:339.00px;top:105.50px;" width="9" height="7" viewBox="0 0 9 7"><path d="M1 1.5 L4.5 5 L8 1.5" fill="none" stroke="#323130" stroke-width="1.5"/></svg>
<div class="t" style="left:354.45px;top:95.00px;font-size:23.89px;color:#323130;">%</div>
<svg class="a" style="left:389.00px;top:99.00px;" width="13" height="17" viewBox="0 0 13 17"><path d="M6.5 2 A3.6 3.6 0 1 1 4 8.2 C5.5 9.5 8.8 9 9.4 5.6 C10.3 10.5 7 15 2 16 L1.6 14.9 C5 13.8 6.6 11.5 6.4 9.2 A3.6 3.6 0 0 1 6.5 2 Z" fill="#b3b0ad"/></svg>
<div class="t" style="left:414.57px;top:98.00px;font-size:10.24px;letter-spacing:0.801px;color:#a19f9d;">.00</div>
<div class="t" style="left:419.07px;top:108.00px;font-size:10.24px;letter-spacing:2.797px;color:#a19f9d;">.0</div>
<svg class="a" style="left:410.00px;top:106.00px;" width="13" height="10" viewBox="0 0 13 10"><path d="M1 5 H10 M6.5 1.5 L10.5 5 L6.5 8.5" fill="none" stroke="#8fc3ea" stroke-width="1.3"/></svg>
<div class="a" style="left:456.00px;top:93.00px;width:88.50px;height:28.50px;background:#f9f9f9;border:1px solid #8a8886;box-sizing:border-box;"></div>
<div class="a" style="left:528.50px;top:94.00px;width:15.00px;height:26.50px;background:#f3f2f1;"></div>
<div class="t" style="left:461.47px;top:100.00px;font-size:15.21px;letter-spacing:0.293px;color:#c8c6c4;">Auto</div>
<svg class="a" style="left:531.00px;top:96.00px;" width="11" height="9" viewBox="0 0 11 9"><path d="M1.5 6.5 L5.5 2.5 L9.5 6.5" fill="none" stroke="#8a8886" stroke-width="1.3"/></svg>
<svg class="a" style="left:531.00px;top:109.00px;" width="11" height="9" viewBox="0 0 11 9"><path d="M1.5 2.5 L5.5 6.5 L9.5 2.5" fill="none" stroke="#8a8886" stroke-width="1.3"/></svg>
<svg class="a" style="left:591.00px;top:66.00px;" width="18" height="20" viewBox="0 0 18 20"><path d="M1.5 1.5 H16.5 V18.5 H1.5 Z M1.5 10 H16.5 M6.5 3.5 V5.5 H11.5 V3.5 M6.5 12 V14 H11.5 V12" fill="none" stroke="#484644" stroke-width="1.5"/></svg>
<div class="t" style="left:613.75px;top:70.00px;font-size:15.21px;letter-spacing:-0.118px;color:#252423;">Data category</div>
<div class="a" style="left:712.00px;top:62.00px;width:162.50px;height:29.50px;background:#fff;border:1px solid #8a8886;box-sizing:border-box;"></div>
<div class="t" style="left:717.34px;top:71.00px;font-size:15.02px;letter-spacing:0.025px;color:#252423;">Uncategorized</div>
<svg class="a" style="left:862.00px;top:75.50px;" width="9" height="7" viewBox="0 0 9 7"><path d="M1 1.5 L4.5 5 L8 1.5" fill="none" stroke="#252423" stroke-width="1.5"/></svg>
<svg class="a" style="left:916.00px;top:51.00px;" width="25" height="36" viewBox="0 0 25 36"><rect x="1" y="1" width="22.5" height="34" fill="#fcfcfc" stroke="#555" stroke-width="1.8"/><rect x="4.6" y="4.6" width="15.5" height="4.6" fill="#6db1ec" stroke="#2b7cd3" stroke-width="0.9"/><rect x="4.6" y="13" width="3.4" height="3.4" fill="#444"/><rect x="4.6" y="20.3" width="3.4" height="3.4" fill="#444"/><rect x="4.6" y="27.6" width="3.4" height="3.4" fill="#444"/><rect x="10.7" y="13" width="3.4" height="3.4" fill="#444"/><rect x="10.7" y="20.3" width="3.4" height="3.4" fill="#444"/><rect x="10.7" y="27.6" width="3.4" height="3.4" fill="#444"/><rect x="16.8" y="13" width="3.4" height="3.4" fill="#444"/><rect x="16.8" y="20.3" width="3.4" height="3.4" fill="#444"/><rect x="16.8" y="27.6" width="3.4" height="3.4" fill="#444"/></svg>
<svg class="a" style="left:977.00px;top:51.00px;" width="25" height="36" viewBox="0 0 25 36"><rect x="1" y="1" width="22.5" height="34" fill="#fcfcfc" stroke="#555" stroke-width="1.8"/><rect x="4.6" y="4.6" width="15.5" height="4.6" fill="#c8c6c4" stroke="#8a8886" stroke-width="0.9"/><rect x="4.6" y="13" width="3.4" height="3.4" fill="#444"/><rect x="4.6" y="20.3" width="3.4" height="3.4" fill="#444"/><rect x="4.6" y="27.6" width="3.4" height="3.4" fill="#444"/><rect x="10.7" y="13" width="3.4" height="3.4" fill="#444"/><rect x="10.7" y="20.3" width="3.4" height="3.4" fill="#444"/><rect x="10.7" y="27.6" width="3.4" height="3.4" fill="#444"/><rect x="16.8" y="13" width="3.4" height="3.4" fill="#444"/><rect x="16.8" y="20.3" width="3.4" height="3.4" fill="#444"/><rect x="16.8" y="27.6" width="3.4" height="3.4" fill="#444"/></svg>
<svg class="a" style="left:968.00px;top:48.00px;" width="20" height="27" viewBox="0 0 20 27"><path d="M9 1 H16.5 L12 10 H17 L3 25.5 L8 14 H2.5 Z" fill="#f7b548" stroke="#d9730d" stroke-width="1" stroke-linejoin="miter"/></svg>
<div class="t" style="left:912.75px;top:95.00px;font-size:15.21px;letter-spacing:0.141px;color:#252423;">New</div>
<div class="t" style="left:899.99px;top:115.00px;font-size:15.21px;letter-spacing:-0.415px;color:#252423;">measure</div>
<div class="t" style="left:970.28px;top:95.00px;font-size:15.21px;letter-spacing:-0.295px;color:#252423;">Quick</div>
<div class="t" style="left:960.99px;top:115.00px;font-size:15.21px;letter-spacing:-0.332px;color:#252423;">measure</div>
</body></html>
